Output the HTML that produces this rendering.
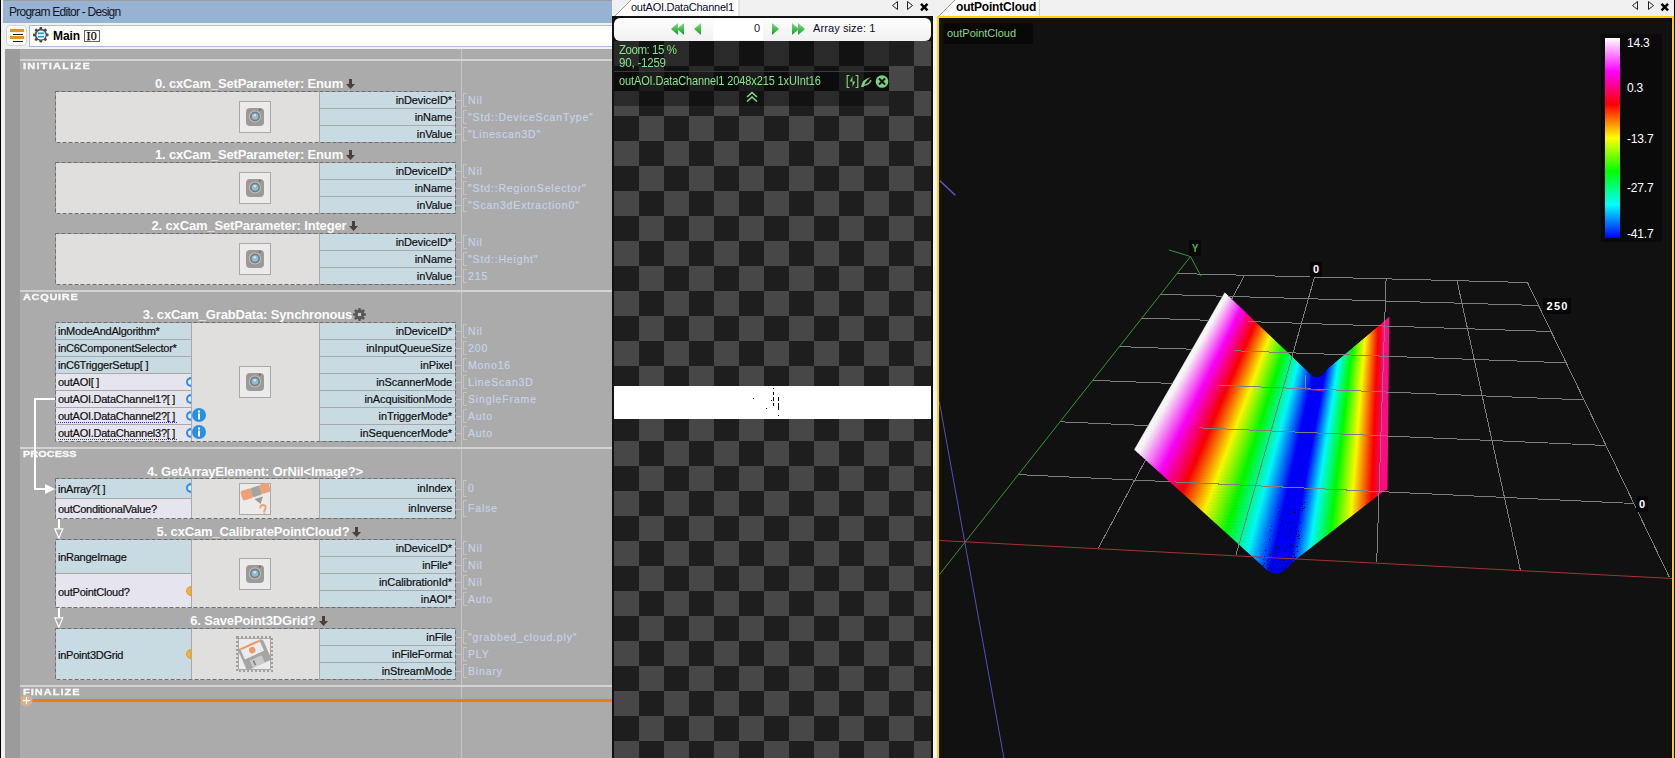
<!DOCTYPE html><html><head><meta charset="utf-8"><style>html,body{margin:0;padding:0;width:1675px;height:758px;overflow:hidden;background:#fff}body>div,body>svg{position:absolute}#root{position:relative;width:1675px;height:758px;overflow:hidden}#root>div,#root>svg{position:absolute;box-sizing:border-box}</style></head><body><div id="root"><div style="left:0px;top:0px;width:612px;height:758px;background:#ababab"></div>
<div style="left:0px;top:0px;width:1px;height:758px;background:#000"></div>
<div style="left:1px;top:0px;width:4px;height:758px;background:#f2f2f2"></div>
<div style="left:3px;top:0px;width:609px;height:23px;background:#97b2d2"></div>
<div style="left:3px;top:0px;width:609px;height:1px;background:#9c9c9c"></div>
<div style="left:9px;top:5.84px;font-family:'Liberation Sans', sans-serif;font-size:12px;line-height:12px;font-weight:normal;color:#101828;letter-spacing:-0.75px;white-space:pre;">Program Editor - Design</div>
<div style="left:3px;top:23px;width:609px;height:26px;background:#f0f0f0"></div>
<div style="left:6px;top:25px;width:21px;height:21px;background:#fdfdfd;border:1px solid #d2d2d2;border-radius:4px;box-sizing:border-box"></div>
<div style="left:10px;top:29px;width:14px;height:3px;background:#e8902a"></div>
<div style="left:13px;top:34px;width:10px;height:1.2px;background:#222"></div>
<div style="left:10px;top:36px;width:14px;height:3px;background:#e8902a"></div>
<div style="left:13px;top:41px;width:10px;height:1.2px;background:#222"></div>
<div style="left:29px;top:25px;width:590px;height:22px;background:#fff;border:1px solid #a4bcd9;box-sizing:border-box"></div>
<svg style="left:32.2px;top:26.2px" width="17.6" height="17.6"><circle cx="8.8" cy="8.8" r="6.08" fill="#4a4a4a"/><rect x="7.40" y="1.00" width="2.8" height="7.80" rx="0.8" fill="#4a4a4a" transform="rotate(0 8.8 8.8)"/><rect x="7.40" y="1.00" width="2.8" height="7.80" rx="0.8" fill="#4a4a4a" transform="rotate(45 8.8 8.8)"/><rect x="7.40" y="1.00" width="2.8" height="7.80" rx="0.8" fill="#4a4a4a" transform="rotate(90 8.8 8.8)"/><rect x="7.40" y="1.00" width="2.8" height="7.80" rx="0.8" fill="#4a4a4a" transform="rotate(135 8.8 8.8)"/><rect x="7.40" y="1.00" width="2.8" height="7.80" rx="0.8" fill="#4a4a4a" transform="rotate(180 8.8 8.8)"/><rect x="7.40" y="1.00" width="2.8" height="7.80" rx="0.8" fill="#4a4a4a" transform="rotate(225 8.8 8.8)"/><rect x="7.40" y="1.00" width="2.8" height="7.80" rx="0.8" fill="#4a4a4a" transform="rotate(270 8.8 8.8)"/><rect x="7.40" y="1.00" width="2.8" height="7.80" rx="0.8" fill="#4a4a4a" transform="rotate(315 8.8 8.8)"/><rect x="7.200000000000001" y="7.200000000000001" width="3.2" height="3.2" fill="#c8c8c8"/></svg>
<svg style="left:34px;top:28px" width="14" height="14"><circle cx="7" cy="7" r="4.6" fill="#fff"/><rect x="3.8" y="4.4" width="6.4" height="1.8" fill="#21a0e0"/><rect x="3.8" y="7.8" width="6.4" height="1.8" fill="#21a0e0"/></svg>
<div style="left:53px;top:29.84px;font-family:'Liberation Sans', sans-serif;font-size:12px;line-height:12px;font-weight:bold;color:#000;letter-spacing:-0.1px;white-space:pre;">Main</div>
<div style="left:84px;top:30px;width:16px;height:12px;border:1px solid #666;box-sizing:border-box;background:#fff"></div>
<div style="left:86.5px;top:29.95px;font-family:'Liberation Serif', serif;font-size:12px;line-height:12px;font-weight:normal;color:#000;letter-spacing:0.3px;white-space:pre;-webkit-text-stroke:0.25px #000;">I0</div>
<div style="left:5px;top:49px;width:15px;height:709px;background:#9b9b9b"></div>
<div style="left:461px;top:49px;width:1px;height:709px;background:#c6c6c6"></div>
<div style="left:20px;top:59px;width:592px;height:2px;background:#d3d3d3"></div>
<div style="left:20px;top:290px;width:592px;height:2px;background:#d3d3d3"></div>
<div style="left:20px;top:447px;width:592px;height:2px;background:#d3d3d3"></div>
<div style="left:20px;top:685px;width:592px;height:2px;background:#d3d3d3"></div>
<div style="left:34px;top:398px;width:2px;height:92px;background:#fff"></div>
<div style="left:22.5px;top:62.18px;font-family:'Liberation Sans', sans-serif;font-size:9px;line-height:9px;font-weight:bold;color:#f8f8f8;letter-spacing:1.02px;white-space:pre;transform:scaleX(1.22);transform-origin:0 0;-webkit-text-stroke:0.3px #f8f8f8;">INITIALIZE</div>
<div style="left:22.5px;top:293.38px;font-family:'Liberation Sans', sans-serif;font-size:9px;line-height:9px;font-weight:bold;color:#f8f8f8;letter-spacing:0.56px;white-space:pre;transform:scaleX(1.22);transform-origin:0 0;-webkit-text-stroke:0.3px #f8f8f8;">ACQUIRE</div>
<div style="left:22.5px;top:450.18px;font-family:'Liberation Sans', sans-serif;font-size:9px;line-height:9px;font-weight:bold;color:#f8f8f8;letter-spacing:0.0px;white-space:pre;transform:scaleX(1.22);transform-origin:0 0;-webkit-text-stroke:0.3px #f8f8f8;">PROCESS</div>
<div style="left:22.5px;top:688.08px;font-family:'Liberation Sans', sans-serif;font-size:9px;line-height:9px;font-weight:bold;color:#f8f8f8;letter-spacing:0.85px;white-space:pre;transform:scaleX(1.22);transform-origin:0 0;-webkit-text-stroke:0.3px #f8f8f8;">FINALIZE</div>
<div style="left:20px;top:699px;width:592px;height:3px;background:#f67a00"></div>
<svg style="left:20px;top:694px" width="13" height="13"><circle cx="6.5" cy="6.5" r="6" fill="#d6b192"/><rect x="3" y="6" width="7" height="1.2" fill="#fff"/><rect x="5.9" y="3" width="1.2" height="7" fill="#fff"/></svg>
<div style="left:0px;width:510px;top:77.00px;text-align:center;white-space:pre;font-family:'Liberation Sans', sans-serif;font-size:13px;line-height:13px;font-weight:bold;color:#fbfbfb;letter-spacing:-0.15px">0. cxCam_SetParameter: Enum<svg style="display:inline-block;vertical-align:baseline;margin-left:3px;position:relative;top:1px" width="9" height="10"><path d="M3 0 H6 V5 H9 L4.5 10 L0 5 H3 Z" fill="#4a3f3a"/></svg></div>
<div style="left:56px;top:92px;width:263px;height:51px;background:#e0dfdd"></div>
<div style="left:319px;top:92px;width:1px;height:51px;background:#a9a9a9"></div>
<div style="left:320px;top:92px;width:135px;height:16px;background:#c9dbe2"></div>
<div style="left:320px;top:108px;width:135px;height:1px;background:#a9a9a9"></div>
<div style="left:-148px;width:600px;text-align:right;top:94.69px;font-family:'Liberation Sans', sans-serif;font-size:11px;line-height:11px;font-weight:normal;color:#101010;letter-spacing:-0.1px;white-space:pre;-webkit-text-stroke:0.2px #101010;">inDeviceID*</div>
<div style="left:456px;top:100px;width:5px;height:1px;background:#c4c4c4"></div>
<div style="left:463px;top:93px;width:1px;height:14px;background:#c4c4c4"></div>
<div style="left:463px;top:93px;width:4px;height:1px;background:#c4c4c4"></div>
<div style="left:463px;top:106px;width:4px;height:1px;background:#c4c4c4"></div>
<div style="left:468px;top:94.61px;font-family:'Liberation Sans', sans-serif;font-size:10.5px;line-height:10.5px;font-weight:normal;color:#c8d4ea;letter-spacing:0.85px;white-space:pre;-webkit-text-stroke:0.15px #c8d4ea;">Nil</div>
<div style="left:320px;top:109px;width:135px;height:16px;background:#c9dbe2"></div>
<div style="left:320px;top:125px;width:135px;height:1px;background:#a9a9a9"></div>
<div style="left:-148px;width:600px;text-align:right;top:111.69px;font-family:'Liberation Sans', sans-serif;font-size:11px;line-height:11px;font-weight:normal;color:#101010;letter-spacing:-0.1px;white-space:pre;-webkit-text-stroke:0.2px #101010;">inName</div>
<div style="left:456px;top:117px;width:5px;height:1px;background:#c4c4c4"></div>
<div style="left:463px;top:110px;width:1px;height:14px;background:#c4c4c4"></div>
<div style="left:463px;top:110px;width:4px;height:1px;background:#c4c4c4"></div>
<div style="left:463px;top:123px;width:4px;height:1px;background:#c4c4c4"></div>
<div style="left:468px;top:111.61px;font-family:'Liberation Sans', sans-serif;font-size:10.5px;line-height:10.5px;font-weight:normal;color:#c8d4ea;letter-spacing:0.85px;white-space:pre;-webkit-text-stroke:0.15px #c8d4ea;">&quot;Std::DeviceScanType&quot;</div>
<div style="left:320px;top:126px;width:135px;height:16px;background:#c9dbe2"></div>
<div style="left:-148px;width:600px;text-align:right;top:128.69px;font-family:'Liberation Sans', sans-serif;font-size:11px;line-height:11px;font-weight:normal;color:#101010;letter-spacing:-0.1px;white-space:pre;-webkit-text-stroke:0.2px #101010;">inValue</div>
<div style="left:456px;top:134px;width:5px;height:1px;background:#c4c4c4"></div>
<div style="left:463px;top:127px;width:1px;height:14px;background:#c4c4c4"></div>
<div style="left:463px;top:127px;width:4px;height:1px;background:#c4c4c4"></div>
<div style="left:463px;top:140px;width:4px;height:1px;background:#c4c4c4"></div>
<div style="left:468px;top:128.61px;font-family:'Liberation Sans', sans-serif;font-size:10.5px;line-height:10.5px;font-weight:normal;color:#c8d4ea;letter-spacing:0.85px;white-space:pre;-webkit-text-stroke:0.15px #c8d4ea;">&quot;Linescan3D&quot;</div>
<svg style="left:55px;top:91px" width="401" height="52"><rect x="0.5" y="0.5" width="400" height="51" fill="none" stroke="#6e6e6e" stroke-width="1" stroke-dasharray="4 2"/></svg>
<svg style="left:239px;top:101px" width="32" height="32"><rect x="0.5" y="0.5" width="31" height="31" fill="#ecebea" stroke="#a9a9a9"/><rect x="7" y="7" width="18" height="18" rx="4" fill="#9a9a9a"/><circle cx="16" cy="15.5" r="6" fill="#c2c2c2"/><circle cx="16" cy="15.5" r="5" fill="#7a7a7a"/><circle cx="16" cy="15.5" r="3.3" fill="#8cbfd6"/><circle cx="15.8" cy="14.3" r="1.2" fill="#d0e6f0"/><circle cx="10.2" cy="9.2" r="1" fill="#e07070"/><circle cx="20.8" cy="8.8" r="1" fill="#6a6a6a"/></svg>
<div style="left:0px;width:510px;top:148.00px;text-align:center;white-space:pre;font-family:'Liberation Sans', sans-serif;font-size:13px;line-height:13px;font-weight:bold;color:#fbfbfb;letter-spacing:-0.15px">1. cxCam_SetParameter: Enum<svg style="display:inline-block;vertical-align:baseline;margin-left:3px;position:relative;top:1px" width="9" height="10"><path d="M3 0 H6 V5 H9 L4.5 10 L0 5 H3 Z" fill="#4a3f3a"/></svg></div>
<div style="left:56px;top:163px;width:263px;height:51px;background:#e0dfdd"></div>
<div style="left:319px;top:163px;width:1px;height:51px;background:#a9a9a9"></div>
<div style="left:320px;top:163px;width:135px;height:16px;background:#c9dbe2"></div>
<div style="left:320px;top:179px;width:135px;height:1px;background:#a9a9a9"></div>
<div style="left:-148px;width:600px;text-align:right;top:165.69px;font-family:'Liberation Sans', sans-serif;font-size:11px;line-height:11px;font-weight:normal;color:#101010;letter-spacing:-0.1px;white-space:pre;-webkit-text-stroke:0.2px #101010;">inDeviceID*</div>
<div style="left:456px;top:171px;width:5px;height:1px;background:#c4c4c4"></div>
<div style="left:463px;top:164px;width:1px;height:14px;background:#c4c4c4"></div>
<div style="left:463px;top:164px;width:4px;height:1px;background:#c4c4c4"></div>
<div style="left:463px;top:177px;width:4px;height:1px;background:#c4c4c4"></div>
<div style="left:468px;top:165.61px;font-family:'Liberation Sans', sans-serif;font-size:10.5px;line-height:10.5px;font-weight:normal;color:#c8d4ea;letter-spacing:0.85px;white-space:pre;-webkit-text-stroke:0.15px #c8d4ea;">Nil</div>
<div style="left:320px;top:180px;width:135px;height:16px;background:#c9dbe2"></div>
<div style="left:320px;top:196px;width:135px;height:1px;background:#a9a9a9"></div>
<div style="left:-148px;width:600px;text-align:right;top:182.69px;font-family:'Liberation Sans', sans-serif;font-size:11px;line-height:11px;font-weight:normal;color:#101010;letter-spacing:-0.1px;white-space:pre;-webkit-text-stroke:0.2px #101010;">inName</div>
<div style="left:456px;top:188px;width:5px;height:1px;background:#c4c4c4"></div>
<div style="left:463px;top:181px;width:1px;height:14px;background:#c4c4c4"></div>
<div style="left:463px;top:181px;width:4px;height:1px;background:#c4c4c4"></div>
<div style="left:463px;top:194px;width:4px;height:1px;background:#c4c4c4"></div>
<div style="left:468px;top:182.61px;font-family:'Liberation Sans', sans-serif;font-size:10.5px;line-height:10.5px;font-weight:normal;color:#c8d4ea;letter-spacing:0.85px;white-space:pre;-webkit-text-stroke:0.15px #c8d4ea;">&quot;Std::RegionSelector&quot;</div>
<div style="left:320px;top:197px;width:135px;height:16px;background:#c9dbe2"></div>
<div style="left:-148px;width:600px;text-align:right;top:199.69px;font-family:'Liberation Sans', sans-serif;font-size:11px;line-height:11px;font-weight:normal;color:#101010;letter-spacing:-0.1px;white-space:pre;-webkit-text-stroke:0.2px #101010;">inValue</div>
<div style="left:456px;top:205px;width:5px;height:1px;background:#c4c4c4"></div>
<div style="left:463px;top:198px;width:1px;height:14px;background:#c4c4c4"></div>
<div style="left:463px;top:198px;width:4px;height:1px;background:#c4c4c4"></div>
<div style="left:463px;top:211px;width:4px;height:1px;background:#c4c4c4"></div>
<div style="left:468px;top:199.61px;font-family:'Liberation Sans', sans-serif;font-size:10.5px;line-height:10.5px;font-weight:normal;color:#c8d4ea;letter-spacing:0.85px;white-space:pre;-webkit-text-stroke:0.15px #c8d4ea;">&quot;Scan3dExtraction0&quot;</div>
<svg style="left:55px;top:162px" width="401" height="52"><rect x="0.5" y="0.5" width="400" height="51" fill="none" stroke="#6e6e6e" stroke-width="1" stroke-dasharray="4 2"/></svg>
<svg style="left:239px;top:172px" width="32" height="32"><rect x="0.5" y="0.5" width="31" height="31" fill="#ecebea" stroke="#a9a9a9"/><rect x="7" y="7" width="18" height="18" rx="4" fill="#9a9a9a"/><circle cx="16" cy="15.5" r="6" fill="#c2c2c2"/><circle cx="16" cy="15.5" r="5" fill="#7a7a7a"/><circle cx="16" cy="15.5" r="3.3" fill="#8cbfd6"/><circle cx="15.8" cy="14.3" r="1.2" fill="#d0e6f0"/><circle cx="10.2" cy="9.2" r="1" fill="#e07070"/><circle cx="20.8" cy="8.8" r="1" fill="#6a6a6a"/></svg>
<div style="left:0px;width:510px;top:219.00px;text-align:center;white-space:pre;font-family:'Liberation Sans', sans-serif;font-size:13px;line-height:13px;font-weight:bold;color:#fbfbfb;letter-spacing:-0.15px">2. cxCam_SetParameter: Integer<svg style="display:inline-block;vertical-align:baseline;margin-left:3px;position:relative;top:1px" width="9" height="10"><path d="M3 0 H6 V5 H9 L4.5 10 L0 5 H3 Z" fill="#4a3f3a"/></svg></div>
<div style="left:56px;top:234px;width:263px;height:51px;background:#e0dfdd"></div>
<div style="left:319px;top:234px;width:1px;height:51px;background:#a9a9a9"></div>
<div style="left:320px;top:234px;width:135px;height:16px;background:#c9dbe2"></div>
<div style="left:320px;top:250px;width:135px;height:1px;background:#a9a9a9"></div>
<div style="left:-148px;width:600px;text-align:right;top:236.69px;font-family:'Liberation Sans', sans-serif;font-size:11px;line-height:11px;font-weight:normal;color:#101010;letter-spacing:-0.1px;white-space:pre;-webkit-text-stroke:0.2px #101010;">inDeviceID*</div>
<div style="left:456px;top:242px;width:5px;height:1px;background:#c4c4c4"></div>
<div style="left:463px;top:235px;width:1px;height:14px;background:#c4c4c4"></div>
<div style="left:463px;top:235px;width:4px;height:1px;background:#c4c4c4"></div>
<div style="left:463px;top:248px;width:4px;height:1px;background:#c4c4c4"></div>
<div style="left:468px;top:236.61px;font-family:'Liberation Sans', sans-serif;font-size:10.5px;line-height:10.5px;font-weight:normal;color:#c8d4ea;letter-spacing:0.85px;white-space:pre;-webkit-text-stroke:0.15px #c8d4ea;">Nil</div>
<div style="left:320px;top:251px;width:135px;height:16px;background:#c9dbe2"></div>
<div style="left:320px;top:267px;width:135px;height:1px;background:#a9a9a9"></div>
<div style="left:-148px;width:600px;text-align:right;top:253.69px;font-family:'Liberation Sans', sans-serif;font-size:11px;line-height:11px;font-weight:normal;color:#101010;letter-spacing:-0.1px;white-space:pre;-webkit-text-stroke:0.2px #101010;">inName</div>
<div style="left:456px;top:259px;width:5px;height:1px;background:#c4c4c4"></div>
<div style="left:463px;top:252px;width:1px;height:14px;background:#c4c4c4"></div>
<div style="left:463px;top:252px;width:4px;height:1px;background:#c4c4c4"></div>
<div style="left:463px;top:265px;width:4px;height:1px;background:#c4c4c4"></div>
<div style="left:468px;top:253.61px;font-family:'Liberation Sans', sans-serif;font-size:10.5px;line-height:10.5px;font-weight:normal;color:#c8d4ea;letter-spacing:0.85px;white-space:pre;-webkit-text-stroke:0.15px #c8d4ea;">&quot;Std::Height&quot;</div>
<div style="left:320px;top:268px;width:135px;height:16px;background:#c9dbe2"></div>
<div style="left:-148px;width:600px;text-align:right;top:270.69px;font-family:'Liberation Sans', sans-serif;font-size:11px;line-height:11px;font-weight:normal;color:#101010;letter-spacing:-0.1px;white-space:pre;-webkit-text-stroke:0.2px #101010;">inValue</div>
<div style="left:456px;top:276px;width:5px;height:1px;background:#c4c4c4"></div>
<div style="left:463px;top:269px;width:1px;height:14px;background:#c4c4c4"></div>
<div style="left:463px;top:269px;width:4px;height:1px;background:#c4c4c4"></div>
<div style="left:463px;top:282px;width:4px;height:1px;background:#c4c4c4"></div>
<div style="left:468px;top:270.61px;font-family:'Liberation Sans', sans-serif;font-size:10.5px;line-height:10.5px;font-weight:normal;color:#c8d4ea;letter-spacing:0.85px;white-space:pre;-webkit-text-stroke:0.15px #c8d4ea;">215</div>
<svg style="left:55px;top:233px" width="401" height="52"><rect x="0.5" y="0.5" width="400" height="51" fill="none" stroke="#6e6e6e" stroke-width="1" stroke-dasharray="4 2"/></svg>
<svg style="left:239px;top:243px" width="32" height="32"><rect x="0.5" y="0.5" width="31" height="31" fill="#ecebea" stroke="#a9a9a9"/><rect x="7" y="7" width="18" height="18" rx="4" fill="#9a9a9a"/><circle cx="16" cy="15.5" r="6" fill="#c2c2c2"/><circle cx="16" cy="15.5" r="5" fill="#7a7a7a"/><circle cx="16" cy="15.5" r="3.3" fill="#8cbfd6"/><circle cx="15.8" cy="14.3" r="1.2" fill="#d0e6f0"/><circle cx="10.2" cy="9.2" r="1" fill="#e07070"/><circle cx="20.8" cy="8.8" r="1" fill="#6a6a6a"/></svg>
<div style="left:0px;width:510px;top:308.00px;text-align:center;white-space:pre;font-family:'Liberation Sans', sans-serif;font-size:13px;line-height:13px;font-weight:bold;color:#fbfbfb;letter-spacing:-0.15px">3. cxCam_GrabData: Synchronous<span style="display:inline-block;width:15px"></span></div>
<svg style="left:352.0px;top:306.9px" width="15.0" height="15.0"><circle cx="7.5" cy="7.5" r="4.81" fill="#585858"/><rect x="6.20" y="1.00" width="2.6" height="6.50" rx="0.8" fill="#585858" transform="rotate(0 7.5 7.5)"/><rect x="6.20" y="1.00" width="2.6" height="6.50" rx="0.8" fill="#585858" transform="rotate(45 7.5 7.5)"/><rect x="6.20" y="1.00" width="2.6" height="6.50" rx="0.8" fill="#585858" transform="rotate(90 7.5 7.5)"/><rect x="6.20" y="1.00" width="2.6" height="6.50" rx="0.8" fill="#585858" transform="rotate(135 7.5 7.5)"/><rect x="6.20" y="1.00" width="2.6" height="6.50" rx="0.8" fill="#585858" transform="rotate(180 7.5 7.5)"/><rect x="6.20" y="1.00" width="2.6" height="6.50" rx="0.8" fill="#585858" transform="rotate(225 7.5 7.5)"/><rect x="6.20" y="1.00" width="2.6" height="6.50" rx="0.8" fill="#585858" transform="rotate(270 7.5 7.5)"/><rect x="6.20" y="1.00" width="2.6" height="6.50" rx="0.8" fill="#585858" transform="rotate(315 7.5 7.5)"/><rect x="5.9" y="5.9" width="3.2" height="3.2" fill="#c8c8c8"/></svg>
<div style="left:56px;top:323px;width:263px;height:119px;background:#e0dfdd"></div>
<div style="left:319px;top:323px;width:1px;height:119px;background:#a9a9a9"></div>
<div style="left:320px;top:323px;width:135px;height:16px;background:#c9dbe2"></div>
<div style="left:320px;top:339px;width:135px;height:1px;background:#a9a9a9"></div>
<div style="left:-148px;width:600px;text-align:right;top:325.69px;font-family:'Liberation Sans', sans-serif;font-size:11px;line-height:11px;font-weight:normal;color:#101010;letter-spacing:-0.1px;white-space:pre;-webkit-text-stroke:0.2px #101010;">inDeviceID*</div>
<div style="left:456px;top:331px;width:5px;height:1px;background:#c4c4c4"></div>
<div style="left:463px;top:324px;width:1px;height:14px;background:#c4c4c4"></div>
<div style="left:463px;top:324px;width:4px;height:1px;background:#c4c4c4"></div>
<div style="left:463px;top:337px;width:4px;height:1px;background:#c4c4c4"></div>
<div style="left:468px;top:325.61px;font-family:'Liberation Sans', sans-serif;font-size:10.5px;line-height:10.5px;font-weight:normal;color:#c8d4ea;letter-spacing:0.85px;white-space:pre;-webkit-text-stroke:0.15px #c8d4ea;">Nil</div>
<div style="left:320px;top:340px;width:135px;height:16px;background:#c9dbe2"></div>
<div style="left:320px;top:356px;width:135px;height:1px;background:#a9a9a9"></div>
<div style="left:-148px;width:600px;text-align:right;top:342.69px;font-family:'Liberation Sans', sans-serif;font-size:11px;line-height:11px;font-weight:normal;color:#101010;letter-spacing:-0.1px;white-space:pre;-webkit-text-stroke:0.2px #101010;">inInputQueueSize</div>
<div style="left:456px;top:348px;width:5px;height:1px;background:#c4c4c4"></div>
<div style="left:463px;top:341px;width:1px;height:14px;background:#c4c4c4"></div>
<div style="left:463px;top:341px;width:4px;height:1px;background:#c4c4c4"></div>
<div style="left:463px;top:354px;width:4px;height:1px;background:#c4c4c4"></div>
<div style="left:468px;top:342.61px;font-family:'Liberation Sans', sans-serif;font-size:10.5px;line-height:10.5px;font-weight:normal;color:#c8d4ea;letter-spacing:0.85px;white-space:pre;-webkit-text-stroke:0.15px #c8d4ea;">200</div>
<div style="left:320px;top:357px;width:135px;height:16px;background:#c9dbe2"></div>
<div style="left:320px;top:373px;width:135px;height:1px;background:#a9a9a9"></div>
<div style="left:-148px;width:600px;text-align:right;top:359.69px;font-family:'Liberation Sans', sans-serif;font-size:11px;line-height:11px;font-weight:normal;color:#101010;letter-spacing:-0.1px;white-space:pre;-webkit-text-stroke:0.2px #101010;">inPixel</div>
<div style="left:456px;top:365px;width:5px;height:1px;background:#c4c4c4"></div>
<div style="left:463px;top:358px;width:1px;height:14px;background:#c4c4c4"></div>
<div style="left:463px;top:358px;width:4px;height:1px;background:#c4c4c4"></div>
<div style="left:463px;top:371px;width:4px;height:1px;background:#c4c4c4"></div>
<div style="left:468px;top:359.61px;font-family:'Liberation Sans', sans-serif;font-size:10.5px;line-height:10.5px;font-weight:normal;color:#c8d4ea;letter-spacing:0.85px;white-space:pre;-webkit-text-stroke:0.15px #c8d4ea;">Mono16</div>
<div style="left:320px;top:374px;width:135px;height:16px;background:#c9dbe2"></div>
<div style="left:320px;top:390px;width:135px;height:1px;background:#a9a9a9"></div>
<div style="left:-148px;width:600px;text-align:right;top:376.69px;font-family:'Liberation Sans', sans-serif;font-size:11px;line-height:11px;font-weight:normal;color:#101010;letter-spacing:-0.1px;white-space:pre;-webkit-text-stroke:0.2px #101010;">inScannerMode</div>
<div style="left:456px;top:382px;width:5px;height:1px;background:#c4c4c4"></div>
<div style="left:463px;top:375px;width:1px;height:14px;background:#c4c4c4"></div>
<div style="left:463px;top:375px;width:4px;height:1px;background:#c4c4c4"></div>
<div style="left:463px;top:388px;width:4px;height:1px;background:#c4c4c4"></div>
<div style="left:468px;top:376.61px;font-family:'Liberation Sans', sans-serif;font-size:10.5px;line-height:10.5px;font-weight:normal;color:#c8d4ea;letter-spacing:0.85px;white-space:pre;-webkit-text-stroke:0.15px #c8d4ea;">LineScan3D</div>
<div style="left:320px;top:391px;width:135px;height:16px;background:#c9dbe2"></div>
<div style="left:320px;top:407px;width:135px;height:1px;background:#a9a9a9"></div>
<div style="left:-148px;width:600px;text-align:right;top:393.69px;font-family:'Liberation Sans', sans-serif;font-size:11px;line-height:11px;font-weight:normal;color:#101010;letter-spacing:-0.1px;white-space:pre;-webkit-text-stroke:0.2px #101010;">inAcquisitionMode</div>
<div style="left:456px;top:399px;width:5px;height:1px;background:#c4c4c4"></div>
<div style="left:463px;top:392px;width:1px;height:14px;background:#c4c4c4"></div>
<div style="left:463px;top:392px;width:4px;height:1px;background:#c4c4c4"></div>
<div style="left:463px;top:405px;width:4px;height:1px;background:#c4c4c4"></div>
<div style="left:468px;top:393.61px;font-family:'Liberation Sans', sans-serif;font-size:10.5px;line-height:10.5px;font-weight:normal;color:#c8d4ea;letter-spacing:0.85px;white-space:pre;-webkit-text-stroke:0.15px #c8d4ea;">SingleFrame</div>
<div style="left:320px;top:408px;width:135px;height:16px;background:#c9dbe2"></div>
<div style="left:320px;top:424px;width:135px;height:1px;background:#a9a9a9"></div>
<div style="left:-148px;width:600px;text-align:right;top:410.69px;font-family:'Liberation Sans', sans-serif;font-size:11px;line-height:11px;font-weight:normal;color:#101010;letter-spacing:-0.1px;white-space:pre;-webkit-text-stroke:0.2px #101010;">inTriggerMode*</div>
<div style="left:456px;top:416px;width:5px;height:1px;background:#c4c4c4"></div>
<div style="left:463px;top:409px;width:1px;height:14px;background:#c4c4c4"></div>
<div style="left:463px;top:409px;width:4px;height:1px;background:#c4c4c4"></div>
<div style="left:463px;top:422px;width:4px;height:1px;background:#c4c4c4"></div>
<div style="left:468px;top:410.61px;font-family:'Liberation Sans', sans-serif;font-size:10.5px;line-height:10.5px;font-weight:normal;color:#c8d4ea;letter-spacing:0.85px;white-space:pre;-webkit-text-stroke:0.15px #c8d4ea;">Auto</div>
<div style="left:320px;top:425px;width:135px;height:16px;background:#c9dbe2"></div>
<div style="left:-148px;width:600px;text-align:right;top:427.69px;font-family:'Liberation Sans', sans-serif;font-size:11px;line-height:11px;font-weight:normal;color:#101010;letter-spacing:-0.1px;white-space:pre;-webkit-text-stroke:0.2px #101010;">inSequencerMode*</div>
<div style="left:456px;top:433px;width:5px;height:1px;background:#c4c4c4"></div>
<div style="left:463px;top:426px;width:1px;height:14px;background:#c4c4c4"></div>
<div style="left:463px;top:426px;width:4px;height:1px;background:#c4c4c4"></div>
<div style="left:463px;top:439px;width:4px;height:1px;background:#c4c4c4"></div>
<div style="left:468px;top:427.61px;font-family:'Liberation Sans', sans-serif;font-size:10.5px;line-height:10.5px;font-weight:normal;color:#c8d4ea;letter-spacing:0.85px;white-space:pre;-webkit-text-stroke:0.15px #c8d4ea;">Auto</div>
<div style="left:191px;top:323px;width:1px;height:119px;background:#a9a9a9"></div>
<div style="left:56px;top:323px;width:135px;height:16px;background:#c9dbe2"></div>
<div style="left:56px;top:339px;width:135px;height:1px;background:#a9a9a9"></div>
<div style="left:58px;top:325.69px;font-family:'Liberation Sans', sans-serif;font-size:11px;line-height:11px;font-weight:normal;color:#101010;letter-spacing:-0.25px;white-space:pre;-webkit-text-stroke:0.2px #101010;">inModeAndAlgorithm*</div>
<div style="left:56px;top:340px;width:135px;height:16px;background:#c9dbe2"></div>
<div style="left:56px;top:356px;width:135px;height:1px;background:#a9a9a9"></div>
<div style="left:58px;top:342.69px;font-family:'Liberation Sans', sans-serif;font-size:11px;line-height:11px;font-weight:normal;color:#101010;letter-spacing:-0.25px;white-space:pre;-webkit-text-stroke:0.2px #101010;">inC6ComponentSelector*</div>
<div style="left:56px;top:357px;width:135px;height:16px;background:#c9dbe2"></div>
<div style="left:56px;top:373px;width:135px;height:1px;background:#a9a9a9"></div>
<div style="left:58px;top:359.69px;font-family:'Liberation Sans', sans-serif;font-size:11px;line-height:11px;font-weight:normal;color:#101010;letter-spacing:-0.25px;white-space:pre;-webkit-text-stroke:0.2px #101010;">inC6TriggerSetup[ ]</div>
<div style="left:56px;top:374px;width:135px;height:16px;background:#e6e4ec"></div>
<div style="left:56px;top:390px;width:135px;height:1px;background:#a9a9a9"></div>
<div style="left:58px;top:376.69px;font-family:'Liberation Sans', sans-serif;font-size:11px;line-height:11px;font-weight:normal;color:#101010;letter-spacing:-0.25px;white-space:pre;-webkit-text-stroke:0.2px #101010;">outAOI[ ]</div>
<div style="left:56px;top:391px;width:135px;height:16px;background:#e6e4ec"></div>
<div style="left:56px;top:407px;width:135px;height:1px;background:#a9a9a9"></div>
<div style="left:58px;top:393.69px;font-family:'Liberation Sans', sans-serif;font-size:11px;line-height:11px;font-weight:normal;color:#101010;letter-spacing:-0.25px;white-space:pre;-webkit-text-stroke:0.2px #101010;">outAOI.DataChannel1?[ ]</div>
<div style="left:56px;top:408px;width:135px;height:16px;background:#e6e4ec"></div>
<div style="left:56px;top:424px;width:135px;height:1px;background:#a9a9a9"></div>
<div style="left:58px;top:422px;width:119px;height:1px;background:repeating-linear-gradient(90deg,#2434d8 0 1px,transparent 1px 2px)"></div>
<div style="left:58px;top:410.69px;font-family:'Liberation Sans', sans-serif;font-size:11px;line-height:11px;font-weight:normal;color:#101010;letter-spacing:-0.25px;white-space:pre;-webkit-text-stroke:0.2px #101010;">outAOI.DataChannel2?[ ]</div>
<div style="left:56px;top:425px;width:135px;height:16px;background:#e6e4ec"></div>
<div style="left:58px;top:439px;width:119px;height:1px;background:repeating-linear-gradient(90deg,#2434d8 0 1px,transparent 1px 2px)"></div>
<div style="left:58px;top:427.69px;font-family:'Liberation Sans', sans-serif;font-size:11px;line-height:11px;font-weight:normal;color:#101010;letter-spacing:-0.25px;white-space:pre;-webkit-text-stroke:0.2px #101010;">outAOI.DataChannel3?[ ]</div>
<svg style="left:55px;top:322px" width="401" height="120"><rect x="0.5" y="0.5" width="400" height="119" fill="none" stroke="#6e6e6e" stroke-width="1" stroke-dasharray="4 2"/></svg>
<svg style="left:239px;top:366px" width="32" height="32"><rect x="0.5" y="0.5" width="31" height="31" fill="#ecebea" stroke="#a9a9a9"/><rect x="7" y="7" width="18" height="18" rx="4" fill="#9a9a9a"/><circle cx="16" cy="15.5" r="6" fill="#c2c2c2"/><circle cx="16" cy="15.5" r="5" fill="#7a7a7a"/><circle cx="16" cy="15.5" r="3.3" fill="#8cbfd6"/><circle cx="15.8" cy="14.3" r="1.2" fill="#d0e6f0"/><circle cx="10.2" cy="9.2" r="1" fill="#e07070"/><circle cx="20.8" cy="8.8" r="1" fill="#6a6a6a"/></svg>
<svg style="left:186px;top:377px" width="5" height="10"><path d="M5 0 A5 5 0 0 0 5 10 Z" fill="#2a8ef2"/><path d="M5 2.2 A3 2.8 0 0 0 5 7.8 Z" fill="#e4eefb"/></svg>
<svg style="left:186px;top:394px" width="5" height="10"><path d="M5 0 A5 5 0 0 0 5 10 Z" fill="#2a8ef2"/><path d="M5 2.2 A3 2.8 0 0 0 5 7.8 Z" fill="#e4eefb"/></svg>
<svg style="left:186px;top:411px" width="5" height="10"><path d="M5 0 A5 5 0 0 0 5 10 Z" fill="#2a8ef2"/><path d="M5 2.2 A3 2.8 0 0 0 5 7.8 Z" fill="#e4eefb"/></svg>
<svg style="left:186px;top:428px" width="5" height="10"><path d="M5 0 A5 5 0 0 0 5 10 Z" fill="#2a8ef2"/><path d="M5 2.2 A3 2.8 0 0 0 5 7.8 Z" fill="#e4eefb"/></svg>
<svg style="left:192px;top:408px" width="14" height="14"><circle cx="7" cy="7" r="7" fill="#2b8fe0"/><rect x="6" y="5.5" width="2" height="6" fill="#fff"/><rect x="6" y="2.5" width="2" height="2" fill="#fff"/></svg>
<svg style="left:192px;top:425px" width="14" height="14"><circle cx="7" cy="7" r="7" fill="#2b8fe0"/><rect x="6" y="5.5" width="2" height="6" fill="#fff"/><rect x="6" y="2.5" width="2" height="2" fill="#fff"/></svg>
<div style="left:0px;width:510px;top:465.00px;text-align:center;white-space:pre;font-family:'Liberation Sans', sans-serif;font-size:13px;line-height:13px;font-weight:bold;color:#fbfbfb;letter-spacing:-0.15px">4. GetArrayElement: OrNil&lt;Image?&gt;</div>
<div style="left:56px;top:479px;width:263px;height:40px;background:#e0dfdd"></div>
<div style="left:319px;top:479px;width:1px;height:40px;background:#a9a9a9"></div>
<div style="left:320px;top:479px;width:135px;height:19px;background:#c9dbe2"></div>
<div style="left:320px;top:498px;width:135px;height:1px;background:#a9a9a9"></div>
<div style="left:-148px;width:600px;text-align:right;top:482.89px;font-family:'Liberation Sans', sans-serif;font-size:11px;line-height:11px;font-weight:normal;color:#101010;letter-spacing:-0.1px;white-space:pre;-webkit-text-stroke:0.2px #101010;">inIndex</div>
<div style="left:456px;top:489px;width:5px;height:1px;background:#c4c4c4"></div>
<div style="left:463px;top:480px;width:1px;height:17px;background:#c4c4c4"></div>
<div style="left:463px;top:480px;width:4px;height:1px;background:#c4c4c4"></div>
<div style="left:463px;top:496px;width:4px;height:1px;background:#c4c4c4"></div>
<div style="left:468px;top:482.81px;font-family:'Liberation Sans', sans-serif;font-size:10.5px;line-height:10.5px;font-weight:normal;color:#c8d4ea;letter-spacing:0.85px;white-space:pre;-webkit-text-stroke:0.15px #c8d4ea;">0</div>
<div style="left:320px;top:499px;width:135px;height:19px;background:#c9dbe2"></div>
<div style="left:-148px;width:600px;text-align:right;top:502.89px;font-family:'Liberation Sans', sans-serif;font-size:11px;line-height:11px;font-weight:normal;color:#101010;letter-spacing:-0.1px;white-space:pre;-webkit-text-stroke:0.2px #101010;">inInverse</div>
<div style="left:456px;top:509px;width:5px;height:1px;background:#c4c4c4"></div>
<div style="left:463px;top:500px;width:1px;height:17px;background:#c4c4c4"></div>
<div style="left:463px;top:500px;width:4px;height:1px;background:#c4c4c4"></div>
<div style="left:463px;top:516px;width:4px;height:1px;background:#c4c4c4"></div>
<div style="left:468px;top:502.81px;font-family:'Liberation Sans', sans-serif;font-size:10.5px;line-height:10.5px;font-weight:normal;color:#c8d4ea;letter-spacing:0.85px;white-space:pre;-webkit-text-stroke:0.15px #c8d4ea;">False</div>
<div style="left:191px;top:479px;width:1px;height:40px;background:#a9a9a9"></div>
<div style="left:56px;top:479px;width:135px;height:19px;background:#c9dbe2"></div>
<div style="left:56px;top:498px;width:135px;height:1px;background:#a9a9a9"></div>
<div style="left:58px;top:484.19px;font-family:'Liberation Sans', sans-serif;font-size:11px;line-height:11px;font-weight:normal;color:#101010;letter-spacing:-0.25px;white-space:pre;-webkit-text-stroke:0.2px #101010;">inArray?[ ]</div>
<div style="left:56px;top:499px;width:135px;height:19px;background:#e6e4ec"></div>
<div style="left:58px;top:504.19px;font-family:'Liberation Sans', sans-serif;font-size:11px;line-height:11px;font-weight:normal;color:#101010;letter-spacing:-0.25px;white-space:pre;-webkit-text-stroke:0.2px #101010;">outConditionalValue?</div>
<svg style="left:55px;top:478px" width="401" height="41"><rect x="0.5" y="0.5" width="400" height="40" fill="none" stroke="#6e6e6e" stroke-width="1" stroke-dasharray="4 2"/></svg>
<svg style="left:239px;top:483px" width="32" height="32"><rect x="0.5" y="0.5" width="31" height="31" fill="#ecebea" stroke="#a9a9a9"/><g transform="rotate(-17 16 9)"><rect x="2" y="4" width="11.5" height="10" rx="2" fill="#eba27a"/><rect x="13" y="4" width="9" height="9.5" rx="1" fill="#a3a3a3"/><rect x="21.5" y="3.5" width="10" height="9.5" rx="2" fill="#eba27a"/></g><path d="M15.5 16 L24 13.5 L21.5 21 Z" fill="#9b9b9b"/><path d="M21.5 25.5 Q21 22 24 22 Q27.5 22.3 26.3 25.8 Q25 27.5 25.2 29.5" fill="none" stroke="#eba27a" stroke-width="1.9"/><circle cx="25.4" cy="31" r="1.1" fill="#eba27a"/></svg>
<svg style="left:186px;top:483px" width="5" height="10"><path d="M5 0 A5 5 0 0 0 5 10 Z" fill="#2a8ef2"/><path d="M5 2.2 A3 2.8 0 0 0 5 7.8 Z" fill="#e4eefb"/></svg>
<div style="left:4px;width:510px;top:524.50px;text-align:center;white-space:pre;font-family:'Liberation Sans', sans-serif;font-size:13px;line-height:13px;font-weight:bold;color:#fbfbfb;letter-spacing:-0.15px">5. cxCam_CalibratePointCloud?<svg style="display:inline-block;vertical-align:baseline;margin-left:3px;position:relative;top:1px" width="9" height="10"><path d="M3 0 H6 V5 H9 L4.5 10 L0 5 H3 Z" fill="#4a3f3a"/></svg></div>
<div style="left:56px;top:540px;width:263px;height:68px;background:#e0dfdd"></div>
<div style="left:319px;top:540px;width:1px;height:68px;background:#a9a9a9"></div>
<div style="left:320px;top:540px;width:135px;height:16px;background:#c9dbe2"></div>
<div style="left:320px;top:556px;width:135px;height:1px;background:#a9a9a9"></div>
<div style="left:-148px;width:600px;text-align:right;top:542.69px;font-family:'Liberation Sans', sans-serif;font-size:11px;line-height:11px;font-weight:normal;color:#101010;letter-spacing:-0.1px;white-space:pre;-webkit-text-stroke:0.2px #101010;">inDeviceID*</div>
<div style="left:456px;top:548px;width:5px;height:1px;background:#c4c4c4"></div>
<div style="left:463px;top:541px;width:1px;height:14px;background:#c4c4c4"></div>
<div style="left:463px;top:541px;width:4px;height:1px;background:#c4c4c4"></div>
<div style="left:463px;top:554px;width:4px;height:1px;background:#c4c4c4"></div>
<div style="left:468px;top:542.61px;font-family:'Liberation Sans', sans-serif;font-size:10.5px;line-height:10.5px;font-weight:normal;color:#c8d4ea;letter-spacing:0.85px;white-space:pre;-webkit-text-stroke:0.15px #c8d4ea;">Nil</div>
<div style="left:320px;top:557px;width:135px;height:16px;background:#c9dbe2"></div>
<div style="left:320px;top:573px;width:135px;height:1px;background:#a9a9a9"></div>
<div style="left:-148px;width:600px;text-align:right;top:559.69px;font-family:'Liberation Sans', sans-serif;font-size:11px;line-height:11px;font-weight:normal;color:#101010;letter-spacing:-0.1px;white-space:pre;-webkit-text-stroke:0.2px #101010;">inFile*</div>
<div style="left:456px;top:565px;width:5px;height:1px;background:#c4c4c4"></div>
<div style="left:463px;top:558px;width:1px;height:14px;background:#c4c4c4"></div>
<div style="left:463px;top:558px;width:4px;height:1px;background:#c4c4c4"></div>
<div style="left:463px;top:571px;width:4px;height:1px;background:#c4c4c4"></div>
<div style="left:468px;top:559.61px;font-family:'Liberation Sans', sans-serif;font-size:10.5px;line-height:10.5px;font-weight:normal;color:#c8d4ea;letter-spacing:0.85px;white-space:pre;-webkit-text-stroke:0.15px #c8d4ea;">Nil</div>
<div style="left:320px;top:574px;width:135px;height:16px;background:#c9dbe2"></div>
<div style="left:320px;top:590px;width:135px;height:1px;background:#a9a9a9"></div>
<div style="left:-148px;width:600px;text-align:right;top:576.69px;font-family:'Liberation Sans', sans-serif;font-size:11px;line-height:11px;font-weight:normal;color:#101010;letter-spacing:-0.1px;white-space:pre;-webkit-text-stroke:0.2px #101010;">inCalibrationId*</div>
<div style="left:456px;top:582px;width:5px;height:1px;background:#c4c4c4"></div>
<div style="left:463px;top:575px;width:1px;height:14px;background:#c4c4c4"></div>
<div style="left:463px;top:575px;width:4px;height:1px;background:#c4c4c4"></div>
<div style="left:463px;top:588px;width:4px;height:1px;background:#c4c4c4"></div>
<div style="left:468px;top:576.61px;font-family:'Liberation Sans', sans-serif;font-size:10.5px;line-height:10.5px;font-weight:normal;color:#c8d4ea;letter-spacing:0.85px;white-space:pre;-webkit-text-stroke:0.15px #c8d4ea;">Nil</div>
<div style="left:320px;top:591px;width:135px;height:16px;background:#c9dbe2"></div>
<div style="left:-148px;width:600px;text-align:right;top:593.69px;font-family:'Liberation Sans', sans-serif;font-size:11px;line-height:11px;font-weight:normal;color:#101010;letter-spacing:-0.1px;white-space:pre;-webkit-text-stroke:0.2px #101010;">inAOI*</div>
<div style="left:456px;top:599px;width:5px;height:1px;background:#c4c4c4"></div>
<div style="left:463px;top:592px;width:1px;height:14px;background:#c4c4c4"></div>
<div style="left:463px;top:592px;width:4px;height:1px;background:#c4c4c4"></div>
<div style="left:463px;top:605px;width:4px;height:1px;background:#c4c4c4"></div>
<div style="left:468px;top:593.61px;font-family:'Liberation Sans', sans-serif;font-size:10.5px;line-height:10.5px;font-weight:normal;color:#c8d4ea;letter-spacing:0.85px;white-space:pre;-webkit-text-stroke:0.15px #c8d4ea;">Auto</div>
<div style="left:191px;top:540px;width:1px;height:68px;background:#a9a9a9"></div>
<div style="left:56px;top:540px;width:135px;height:33px;background:#c9dbe2"></div>
<div style="left:56px;top:573px;width:135px;height:1px;background:#a9a9a9"></div>
<div style="left:58px;top:552.19px;font-family:'Liberation Sans', sans-serif;font-size:11px;line-height:11px;font-weight:normal;color:#101010;letter-spacing:-0.25px;white-space:pre;-webkit-text-stroke:0.2px #101010;">inRangeImage</div>
<div style="left:56px;top:574px;width:135px;height:33px;background:#e6e4ec"></div>
<div style="left:58px;top:587.19px;font-family:'Liberation Sans', sans-serif;font-size:11px;line-height:11px;font-weight:normal;color:#101010;letter-spacing:-0.25px;white-space:pre;-webkit-text-stroke:0.2px #101010;">outPointCloud?</div>
<svg style="left:55px;top:539px" width="401" height="69"><rect x="0.5" y="0.5" width="400" height="68" fill="none" stroke="#6e6e6e" stroke-width="1" stroke-dasharray="4 2"/></svg>
<svg style="left:239px;top:558px" width="32" height="32"><rect x="0.5" y="0.5" width="31" height="31" fill="#ecebea" stroke="#a9a9a9"/><rect x="7" y="7" width="18" height="18" rx="4" fill="#9a9a9a"/><circle cx="16" cy="15.5" r="6" fill="#c2c2c2"/><circle cx="16" cy="15.5" r="5" fill="#7a7a7a"/><circle cx="16" cy="15.5" r="3.3" fill="#8cbfd6"/><circle cx="15.8" cy="14.3" r="1.2" fill="#d0e6f0"/><circle cx="10.2" cy="9.2" r="1" fill="#e07070"/><circle cx="20.8" cy="8.8" r="1" fill="#6a6a6a"/></svg>
<svg style="left:186px;top:586px" width="5" height="10"><path d="M5 0.5 A4.5 4.5 0 0 0 5 9.5 Z" fill="#f6b13a" stroke="#e89a20" stroke-width="1"/></svg>
<div style="left:4px;width:510px;top:614.00px;text-align:center;white-space:pre;font-family:'Liberation Sans', sans-serif;font-size:13px;line-height:13px;font-weight:bold;color:#fbfbfb;letter-spacing:-0.15px">6. SavePoint3DGrid?<svg style="display:inline-block;vertical-align:baseline;margin-left:3px;position:relative;top:1px" width="9" height="10"><path d="M3 0 H6 V5 H9 L4.5 10 L0 5 H3 Z" fill="#4a3f3a"/></svg></div>
<div style="left:56px;top:629px;width:263px;height:51px;background:#e0dfdd"></div>
<div style="left:319px;top:629px;width:1px;height:51px;background:#a9a9a9"></div>
<div style="left:320px;top:629px;width:135px;height:16px;background:#c9dbe2"></div>
<div style="left:320px;top:645px;width:135px;height:1px;background:#a9a9a9"></div>
<div style="left:-148px;width:600px;text-align:right;top:631.69px;font-family:'Liberation Sans', sans-serif;font-size:11px;line-height:11px;font-weight:normal;color:#101010;letter-spacing:-0.1px;white-space:pre;-webkit-text-stroke:0.2px #101010;">inFile</div>
<div style="left:456px;top:637px;width:5px;height:1px;background:#c4c4c4"></div>
<div style="left:463px;top:630px;width:1px;height:14px;background:#c4c4c4"></div>
<div style="left:463px;top:630px;width:4px;height:1px;background:#c4c4c4"></div>
<div style="left:463px;top:643px;width:4px;height:1px;background:#c4c4c4"></div>
<div style="left:468px;top:631.61px;font-family:'Liberation Sans', sans-serif;font-size:10.5px;line-height:10.5px;font-weight:normal;color:#c8d4ea;letter-spacing:0.85px;white-space:pre;-webkit-text-stroke:0.15px #c8d4ea;">&quot;grabbed_cloud.ply&quot;</div>
<div style="left:320px;top:646px;width:135px;height:16px;background:#c9dbe2"></div>
<div style="left:320px;top:662px;width:135px;height:1px;background:#a9a9a9"></div>
<div style="left:-148px;width:600px;text-align:right;top:648.69px;font-family:'Liberation Sans', sans-serif;font-size:11px;line-height:11px;font-weight:normal;color:#101010;letter-spacing:-0.1px;white-space:pre;-webkit-text-stroke:0.2px #101010;">inFileFormat</div>
<div style="left:456px;top:654px;width:5px;height:1px;background:#c4c4c4"></div>
<div style="left:463px;top:647px;width:1px;height:14px;background:#c4c4c4"></div>
<div style="left:463px;top:647px;width:4px;height:1px;background:#c4c4c4"></div>
<div style="left:463px;top:660px;width:4px;height:1px;background:#c4c4c4"></div>
<div style="left:468px;top:648.61px;font-family:'Liberation Sans', sans-serif;font-size:10.5px;line-height:10.5px;font-weight:normal;color:#c8d4ea;letter-spacing:0.85px;white-space:pre;-webkit-text-stroke:0.15px #c8d4ea;">PLY</div>
<div style="left:320px;top:663px;width:135px;height:16px;background:#c9dbe2"></div>
<div style="left:-148px;width:600px;text-align:right;top:665.69px;font-family:'Liberation Sans', sans-serif;font-size:11px;line-height:11px;font-weight:normal;color:#101010;letter-spacing:-0.1px;white-space:pre;-webkit-text-stroke:0.2px #101010;">inStreamMode</div>
<div style="left:456px;top:671px;width:5px;height:1px;background:#c4c4c4"></div>
<div style="left:463px;top:664px;width:1px;height:14px;background:#c4c4c4"></div>
<div style="left:463px;top:664px;width:4px;height:1px;background:#c4c4c4"></div>
<div style="left:463px;top:677px;width:4px;height:1px;background:#c4c4c4"></div>
<div style="left:468px;top:665.61px;font-family:'Liberation Sans', sans-serif;font-size:10.5px;line-height:10.5px;font-weight:normal;color:#c8d4ea;letter-spacing:0.85px;white-space:pre;-webkit-text-stroke:0.15px #c8d4ea;">Binary</div>
<div style="left:191px;top:629px;width:1px;height:51px;background:#a9a9a9"></div>
<div style="left:56px;top:629px;width:135px;height:50px;background:#c9dbe2"></div>
<div style="left:58px;top:649.69px;font-family:'Liberation Sans', sans-serif;font-size:11px;line-height:11px;font-weight:normal;color:#101010;letter-spacing:-0.25px;white-space:pre;-webkit-text-stroke:0.2px #101010;">inPoint3DGrid</div>
<svg style="left:55px;top:628px" width="401" height="52"><rect x="0.5" y="0.5" width="400" height="51" fill="none" stroke="#6e6e6e" stroke-width="1" stroke-dasharray="4 2"/></svg>
<svg style="left:236px;top:636px" width="37" height="36"><rect x="1" y="1" width="35" height="34" fill="none" stroke="#a0a0a0" stroke-width="2" stroke-dasharray="2 2"/><rect x="2.5" y="2.5" width="32" height="31" fill="#ecebea" stroke="#a9a9a9" stroke-width="1"/><g transform="rotate(-24 18.5 18)"><path d="M5 7 H30 L32 9 V28 Q32 30 30 30 H7 Q5 30 5 28 Z" fill="#a5a5a5"/><rect x="7.5" y="7" width="21" height="12" fill="#e8ecef"/><rect x="7.5" y="7" width="21" height="2" fill="#ee9a66"/><circle cx="18" cy="13.5" r="3.2" fill="#ee9a66"/><rect x="11.5" y="22" width="13" height="8" fill="#cacaca"/><rect x="14" y="23.5" width="1.6" height="5" fill="#7d7d7d"/></g></svg>
<svg style="left:186px;top:649px" width="5" height="10"><path d="M5 0.5 A4.5 4.5 0 0 0 5 9.5 Z" fill="#f6b13a" stroke="#e89a20" stroke-width="1"/></svg>
<div style="left:34px;top:398px;width:21px;height:2px;background:#fff"></div>
<div style="left:34px;top:488px;width:12px;height:2px;background:#fff"></div>
<svg style="left:44px;top:483px" width="12" height="12"><path d="M1 1 L11 6 L1 11 Z" fill="#fff"/></svg>
<div style="left:58px;top:519px;width:1.5px;height:9px;background:#fff"></div>
<svg style="left:54px;top:528px" width="10" height="11"><path d="M0.8 0.8 H8.8 L4.8 10.2 Z" fill="none" stroke="#fff" stroke-width="1.2"/></svg>
<div style="left:58px;top:608px;width:1.5px;height:9px;background:#fff"></div>
<svg style="left:54px;top:617px" width="10" height="11"><path d="M0.8 0.8 H8.8 L4.8 10.2 Z" fill="none" stroke="#fff" stroke-width="1.2"/></svg>
<div style="left:612px;top:0px;width:325px;height:16px;background:#f0f0f0"></div>
<svg style="left:612px;top:0px" width="130" height="17"><path d="M3 16 L19 0 H127 V16 Z" fill="#fff"/><path d="M3 16 L19 0" stroke="#9a9a9a" stroke-width="1" fill="none"/><path d="M127 0 V16" stroke="#d0d0d0" stroke-width="1"/></svg>
<div style="left:631px;top:1.69px;font-family:'Liberation Sans', sans-serif;font-size:11px;line-height:11px;font-weight:normal;color:#0a0a30;letter-spacing:-0.25px;white-space:pre;">outAOI.DataChannel1</div>
<svg style="left:890px;top:0px" width="42" height="12"><path d="M7.5 1.5 L2.5 5.5 L7.5 9.5 Z" fill="none" stroke="#222" stroke-width="1"/><path d="M17.5 1.5 L22.5 5.5 L17.5 9.5 Z" fill="none" stroke="#222" stroke-width="1"/><path d="M31 3.8 L37.5 10.3 M37.5 3.8 L31 10.3" stroke="#000" stroke-width="2.6"/></svg>
<div style="left:612px;top:16px;width:321px;height:742px;background:#111"></div>
<div style="left:614px;top:41px;width:317px;height:717px;background:conic-gradient(#1e1e1e 0 90deg,#474747 0 180deg,#1e1e1e 0 270deg,#474747 0);background-size:50px 50px"></div>
<div style="left:614px;top:18px;width:317px;height:23px;background:linear-gradient(#fdfdfd,#f1f1f1);border-radius:6px 6px 6px 6px"></div>
<div style="left:713px;top:19px;width:50px;height:21px;background:#fff"></div>
<svg style="left:668px;top:20px" width="40" height="18"><defs><linearGradient id="ga" x1="0" y1="0" x2="0" y2="1"><stop offset="0" stop-color="#7ee07e"/><stop offset="1" stop-color="#149a2a"/></linearGradient></defs><path d="M3 9 L10 3 V15 Z" fill="url(#ga)"/><path d="M9 9 L16 3 V15 Z" fill="url(#ga)"/><path d="M26 9 L33 3 V15 Z" fill="url(#ga)"/></svg>
<div style="left:754px;top:22.69px;font-family:'Liberation Sans', sans-serif;font-size:11px;line-height:11px;font-weight:normal;color:#102040;letter-spacing:0px;white-space:pre;">0</div>
<svg style="left:768px;top:20px" width="40" height="18"><defs><linearGradient id="gb" x1="0" y1="0" x2="0" y2="1"><stop offset="0" stop-color="#7ee07e"/><stop offset="1" stop-color="#149a2a"/></linearGradient></defs><path d="M4 3 L11 9 L4 15 Z" fill="url(#gb)"/><path d="M24 3 L31 9 L24 15 Z" fill="url(#gb)"/><path d="M30 3 L37 9 L30 15 Z" fill="url(#gb)"/></svg>
<div style="left:813px;top:22.69px;font-family:'Liberation Sans', sans-serif;font-size:11px;line-height:11px;font-weight:normal;color:#0a0a30;letter-spacing:0.1px;white-space:pre;">Array size: 1</div>
<div style="left:614px;top:41px;width:275px;height:65px;background:rgba(0,0,0,0.4)"></div>
<div style="left:614px;top:71px;width:275px;height:1px;background:#3a3a3a"></div>
<div style="left:614px;top:72px;width:275px;height:19px;background:rgba(0,0,0,0.3)"></div>
<div style="left:619px;top:45.47px;font-family:'Liberation Sans', sans-serif;font-size:11.5px;line-height:11.5px;font-weight:normal;color:#86e486;letter-spacing:-0.45px;white-space:pre;transform:scaleY(1.15);transform-origin:0 9.7px;">Zoom: 15 %</div>
<div style="left:619px;top:58.07px;font-family:'Liberation Sans', sans-serif;font-size:11.5px;line-height:11.5px;font-weight:normal;color:#86e486;letter-spacing:-0.2px;white-space:pre;transform:scaleY(1.12);transform-origin:0 9.7px;">90, -1259</div>
<div style="left:619px;top:76.29px;font-family:'Liberation Sans', sans-serif;font-size:11px;line-height:11px;font-weight:normal;color:#86e486;letter-spacing:-0.12px;white-space:pre;transform:scaleY(1.12);transform-origin:0 9.3px;">outAOI.DataChannel1 2048x215 1xUInt16</div>
<svg style="left:846px;top:73px" width="44" height="17"><path d="M3.5 2.5 H1.2 V14.5 H3.5 M9.5 2.5 H11.8 V14.5 H9.5" fill="none" stroke="#7fd07f" stroke-width="1.2"/><path d="M6.5 3 V8.5 L3.8 8.5 Z M6.5 8.5 L9.2 8.5 L6.5 14 Z" fill="#7fd07f"/><path d="M15 14 Q16 6 25 4 Q19 8 17.5 14 Z" fill="#7fd07f"/><path d="M17 12.5 Q23 12 25 7" stroke="#7fd07f" stroke-width="1.4" fill="none"/><circle cx="36" cy="8.5" r="6.3" fill="#7fd07f"/><path d="M33 5.5 L39 11.5 M39 5.5 L33 11.5" stroke="#111" stroke-width="2"/></svg>
<svg style="left:746px;top:91px" width="12" height="12"><path d="M1 6 L6 1.5 L11 6 M1 10.5 L6 6 L11 10.5" fill="none" stroke="#7fe07f" stroke-width="1.6"/></svg>
<div style="left:614px;top:386px;width:317px;height:33px;background:#fff"></div>
<svg style="left:740px;top:386px" width="50" height="33"><rect x="33" y="2" width="1" height="1" fill="#000"/><rect x="33" y="6" width="1" height="3" fill="#000"/><rect x="33" y="11" width="1" height="4" fill="#000"/><rect x="33" y="17" width="1" height="3" fill="#000"/><rect x="38" y="11" width="1" height="4" fill="#000"/><rect x="38" y="17" width="1" height="7" fill="#000"/><rect x="38" y="29" width="1" height="1" fill="#000"/><rect x="13" y="12" width="1" height="1" fill="#000"/><rect x="26" y="22" width="1" height="1" fill="#000"/><rect x="31" y="14" width="1" height="1" fill="#000"/></svg>
<div style="left:933px;top:16px;width:4px;height:742px;background:#f4f4f8"></div>
<div style="left:937px;top:0px;width:738px;height:16px;background:#f0f0f0"></div>
<svg style="left:937px;top:0px" width="105" height="17"><path d="M2 16 L18 0 H102 V16 Z" fill="#fff"/><path d="M2 16 L18 0" stroke="#9a9a9a" stroke-width="1" fill="none"/><path d="M102.5 0 V16" stroke="#d0d0d0" stroke-width="1"/></svg>
<div style="left:956px;top:0.84px;font-family:'Liberation Sans', sans-serif;font-size:12px;line-height:12px;font-weight:bold;color:#000;letter-spacing:-0.2px;white-space:pre;">outPointCloud</div>
<svg style="left:1630px;top:0px" width="42" height="12"><path d="M7.5 1.5 L2.5 5.5 L7.5 9.5 Z" fill="none" stroke="#222" stroke-width="1"/><path d="M18.5 1.5 L23.5 5.5 L18.5 9.5 Z" fill="none" stroke="#222" stroke-width="1"/><path d="M31.5 3.8 L38 10.3 M38 3.8 L31.5 10.3" stroke="#000" stroke-width="2.6"/></svg>
<div style="left:937px;top:16px;width:738px;height:742px;background:#ffd200"></div>
<div style="left:939px;top:18px;width:733px;height:740px;background:#111111"></div>
<div style="left:1674px;top:0px;width:1px;height:758px;background:#050505"></div>
<div style="left:1671px;top:18px;width:1px;height:740px;background:#00000c"></div>
<svg style="left:939px;top:18px" width="733" height="740" viewBox="939 18 733 740"><polygon points="1134.60,449.50 1135.40,450.22 1225.21,293.37 1224.69,292.88" fill="#ffffff" stroke="#ffffff" stroke-width="0.6"/><polygon points="1135.40,450.22 1136.19,450.94 1225.73,293.86 1225.21,293.37" fill="#ffffff" stroke="#ffffff" stroke-width="0.6"/><polygon points="1136.19,450.94 1136.99,451.67 1226.24,294.36 1225.73,293.86" fill="#ffffff" stroke="#ffffff" stroke-width="0.6"/><polygon points="1136.99,451.67 1137.78,452.39 1226.76,294.85 1226.24,294.36" fill="#ffffff" stroke="#ffffff" stroke-width="0.6"/><polygon points="1137.78,452.39 1138.58,453.11 1227.28,295.35 1226.76,294.85" fill="#ffffff" stroke="#ffffff" stroke-width="0.6"/><polygon points="1138.58,453.11 1139.38,453.83 1227.80,295.84 1227.28,295.35" fill="#fffaff" stroke="#fffaff" stroke-width="0.6"/><polygon points="1139.38,453.83 1140.17,454.55 1228.31,296.33 1227.80,295.84" fill="#fff1ff" stroke="#fff1ff" stroke-width="0.6"/><polygon points="1140.17,454.55 1140.97,455.27 1228.83,296.83 1228.31,296.33" fill="#ffe7ff" stroke="#ffe7ff" stroke-width="0.6"/><polygon points="1140.97,455.27 1141.77,456.00 1229.35,297.32 1228.83,296.83" fill="#ffdeff" stroke="#ffdeff" stroke-width="0.6"/><polygon points="1141.77,456.00 1142.56,456.72 1229.87,297.82 1229.35,297.32" fill="#ffd5ff" stroke="#ffd5ff" stroke-width="0.6"/><polygon points="1142.56,456.72 1143.36,457.44 1230.38,298.31 1229.87,297.82" fill="#ffccff" stroke="#ffccff" stroke-width="0.6"/><polygon points="1143.36,457.44 1144.15,458.16 1230.90,298.81 1230.38,298.31" fill="#ffc2ff" stroke="#ffc2ff" stroke-width="0.6"/><polygon points="1144.15,458.16 1144.95,458.88 1231.42,299.30 1230.90,298.81" fill="#ffb9ff" stroke="#ffb9ff" stroke-width="0.6"/><polygon points="1144.95,458.88 1145.75,459.61 1231.94,299.79 1231.42,299.30" fill="#ffb0ff" stroke="#ffb0ff" stroke-width="0.6"/><polygon points="1145.75,459.61 1146.54,460.33 1232.45,300.29 1231.94,299.79" fill="#ffa7ff" stroke="#ffa7ff" stroke-width="0.6"/><polygon points="1146.54,460.33 1147.34,461.05 1232.97,300.78 1232.45,300.29" fill="#ff9dff" stroke="#ff9dff" stroke-width="0.6"/><polygon points="1147.34,461.05 1148.14,461.77 1233.49,301.28 1232.97,300.78" fill="#ff94ff" stroke="#ff94ff" stroke-width="0.6"/><polygon points="1148.14,461.77 1148.93,462.49 1234.01,301.77 1233.49,301.28" fill="#ff8bff" stroke="#ff8bff" stroke-width="0.6"/><polygon points="1148.93,462.49 1149.73,463.22 1234.52,302.26 1234.01,301.77" fill="#ff81ff" stroke="#ff81ff" stroke-width="0.6"/><polygon points="1149.73,463.22 1150.52,463.94 1235.04,302.76 1234.52,302.26" fill="#ff78ff" stroke="#ff78ff" stroke-width="0.6"/><polygon points="1150.52,463.94 1151.32,464.66 1235.56,303.25 1235.04,302.76" fill="#ff6fff" stroke="#ff6fff" stroke-width="0.6"/><polygon points="1151.32,464.66 1152.12,465.38 1236.08,303.75 1235.56,303.25" fill="#ff66ff" stroke="#ff66ff" stroke-width="0.6"/><polygon points="1152.12,465.38 1152.91,466.10 1236.59,304.24 1236.08,303.75" fill="#ff5cff" stroke="#ff5cff" stroke-width="0.6"/><polygon points="1152.91,466.10 1153.71,466.82 1237.11,304.74 1236.59,304.24" fill="#ff53ff" stroke="#ff53ff" stroke-width="0.6"/><polygon points="1153.71,466.82 1154.51,467.55 1237.63,305.23 1237.11,304.74" fill="#ff4aff" stroke="#ff4aff" stroke-width="0.6"/><polygon points="1154.51,467.55 1155.30,468.27 1238.15,305.72 1237.63,305.23" fill="#ff41ff" stroke="#ff41ff" stroke-width="0.6"/><polygon points="1155.30,468.27 1156.10,468.99 1238.66,306.22 1238.15,305.72" fill="#ff37ff" stroke="#ff37ff" stroke-width="0.6"/><polygon points="1156.10,468.99 1156.89,469.71 1239.18,306.71 1238.66,306.22" fill="#ff2eff" stroke="#ff2eff" stroke-width="0.6"/><polygon points="1156.89,469.71 1157.69,470.43 1239.70,307.21 1239.18,306.71" fill="#ff25ff" stroke="#ff25ff" stroke-width="0.6"/><polygon points="1157.69,470.43 1158.49,471.16 1240.22,307.70 1239.70,307.21" fill="#ff1cff" stroke="#ff1cff" stroke-width="0.6"/><polygon points="1158.49,471.16 1159.28,471.88 1240.73,308.20 1240.22,307.70" fill="#ff12ff" stroke="#ff12ff" stroke-width="0.6"/><polygon points="1159.28,471.88 1160.08,472.60 1241.25,308.69 1240.73,308.20" fill="#ff09ff" stroke="#ff09ff" stroke-width="0.6"/><polygon points="1160.08,472.60 1160.88,473.32 1241.77,309.18 1241.25,308.69" fill="#ff00ff" stroke="#ff00ff" stroke-width="0.6"/><polygon points="1160.88,473.32 1161.67,474.04 1242.29,309.68 1241.77,309.18" fill="#ff00f5" stroke="#ff00f5" stroke-width="0.6"/><polygon points="1161.67,474.04 1162.47,474.77 1242.80,310.17 1242.29,309.68" fill="#ff00ec" stroke="#ff00ec" stroke-width="0.6"/><polygon points="1162.47,474.77 1163.26,475.49 1243.32,310.67 1242.80,310.17" fill="#ff00e3" stroke="#ff00e3" stroke-width="0.6"/><polygon points="1163.26,475.49 1164.06,476.21 1243.84,311.16 1243.32,310.67" fill="#ff00da" stroke="#ff00da" stroke-width="0.6"/><polygon points="1164.06,476.21 1164.86,476.93 1244.36,311.65 1243.84,311.16" fill="#ff00d0" stroke="#ff00d0" stroke-width="0.6"/><polygon points="1164.86,476.93 1165.65,477.65 1244.87,312.15 1244.36,311.65" fill="#ff00c7" stroke="#ff00c7" stroke-width="0.6"/><polygon points="1165.65,477.65 1166.45,478.38 1245.39,312.64 1244.87,312.15" fill="#ff00be" stroke="#ff00be" stroke-width="0.6"/><polygon points="1166.45,478.38 1167.25,479.10 1245.91,313.14 1245.39,312.64" fill="#ff00b5" stroke="#ff00b5" stroke-width="0.6"/><polygon points="1167.25,479.10 1168.04,479.82 1246.43,313.63 1245.91,313.14" fill="#ff00ab" stroke="#ff00ab" stroke-width="0.6"/><polygon points="1168.04,479.82 1168.84,480.54 1246.95,314.13 1246.43,313.63" fill="#ff00a2" stroke="#ff00a2" stroke-width="0.6"/><polygon points="1168.84,480.54 1169.63,481.26 1247.46,314.62 1246.95,314.13" fill="#ff0099" stroke="#ff0099" stroke-width="0.6"/><polygon points="1169.63,481.26 1170.43,481.98 1247.98,315.11 1247.46,314.62" fill="#ff0090" stroke="#ff0090" stroke-width="0.6"/><polygon points="1170.43,481.98 1171.23,482.71 1248.50,315.61 1247.98,315.11" fill="#ff0086" stroke="#ff0086" stroke-width="0.6"/><polygon points="1171.23,482.71 1172.02,483.43 1249.02,316.10 1248.50,315.61" fill="#ff007d" stroke="#ff007d" stroke-width="0.6"/><polygon points="1172.02,483.43 1172.82,484.15 1249.53,316.60 1249.02,316.10" fill="#ff0074" stroke="#ff0074" stroke-width="0.6"/><polygon points="1172.82,484.15 1173.62,484.87 1250.05,317.09 1249.53,316.60" fill="#ff006a" stroke="#ff006a" stroke-width="0.6"/><polygon points="1173.62,484.87 1174.41,485.59 1250.57,317.59 1250.05,317.09" fill="#ff0061" stroke="#ff0061" stroke-width="0.6"/><polygon points="1174.41,485.59 1175.21,486.32 1251.09,318.08 1250.57,317.59" fill="#ff0058" stroke="#ff0058" stroke-width="0.6"/><polygon points="1175.21,486.32 1176.00,487.04 1251.60,318.57 1251.09,318.08" fill="#ff004f" stroke="#ff004f" stroke-width="0.6"/><polygon points="1176.00,487.04 1176.80,487.76 1252.12,319.07 1251.60,318.57" fill="#ff0045" stroke="#ff0045" stroke-width="0.6"/><polygon points="1176.80,487.76 1177.60,488.48 1252.64,319.56 1252.12,319.07" fill="#ff003c" stroke="#ff003c" stroke-width="0.6"/><polygon points="1177.60,488.48 1178.39,489.20 1253.16,320.06 1252.64,319.56" fill="#ff0033" stroke="#ff0033" stroke-width="0.6"/><polygon points="1178.39,489.20 1179.19,489.93 1253.67,320.55 1253.16,320.06" fill="#ff002a" stroke="#ff002a" stroke-width="0.6"/><polygon points="1179.19,489.93 1179.99,490.65 1254.19,321.04 1253.67,320.55" fill="#ff0020" stroke="#ff0020" stroke-width="0.6"/><polygon points="1179.99,490.65 1180.78,491.37 1254.71,321.54 1254.19,321.04" fill="#ff0017" stroke="#ff0017" stroke-width="0.6"/><polygon points="1180.78,491.37 1181.58,492.09 1255.23,322.03 1254.71,321.54" fill="#ff000e" stroke="#ff000e" stroke-width="0.6"/><polygon points="1181.58,492.09 1182.38,492.81 1255.74,322.53 1255.23,322.03" fill="#ff0004" stroke="#ff0004" stroke-width="0.6"/><polygon points="1182.38,492.81 1183.17,493.53 1256.26,323.02 1255.74,322.53" fill="#ff0500" stroke="#ff0500" stroke-width="0.6"/><polygon points="1183.17,493.53 1183.97,494.26 1256.78,323.52 1256.26,323.02" fill="#ff0e00" stroke="#ff0e00" stroke-width="0.6"/><polygon points="1183.97,494.26 1184.76,494.98 1257.30,324.01 1256.78,323.52" fill="#ff1700" stroke="#ff1700" stroke-width="0.6"/><polygon points="1184.76,494.98 1185.56,495.70 1257.81,324.50 1257.30,324.01" fill="#ff2100" stroke="#ff2100" stroke-width="0.6"/><polygon points="1185.56,495.70 1186.36,496.42 1258.33,325.00 1257.81,324.50" fill="#ff2a00" stroke="#ff2a00" stroke-width="0.6"/><polygon points="1186.36,496.42 1187.15,497.14 1258.85,325.49 1258.33,325.00" fill="#ff3300" stroke="#ff3300" stroke-width="0.6"/><polygon points="1187.15,497.14 1187.95,497.87 1259.37,325.99 1258.85,325.49" fill="#ff3c00" stroke="#ff3c00" stroke-width="0.6"/><polygon points="1187.95,497.87 1188.74,498.59 1259.88,326.48 1259.37,325.99" fill="#ff4600" stroke="#ff4600" stroke-width="0.6"/><polygon points="1188.74,498.59 1189.54,499.31 1260.40,326.98 1259.88,326.48" fill="#ff4f00" stroke="#ff4f00" stroke-width="0.6"/><polygon points="1189.54,499.31 1190.34,500.03 1260.92,327.47 1260.40,326.98" fill="#ff5800" stroke="#ff5800" stroke-width="0.6"/><polygon points="1190.34,500.03 1191.13,500.75 1261.44,327.96 1260.92,327.47" fill="#ff6100" stroke="#ff6100" stroke-width="0.6"/><polygon points="1191.13,500.75 1191.93,501.48 1261.95,328.46 1261.44,327.96" fill="#ff6b00" stroke="#ff6b00" stroke-width="0.6"/><polygon points="1191.93,501.48 1192.73,502.20 1262.47,328.95 1261.95,328.46" fill="#ff7400" stroke="#ff7400" stroke-width="0.6"/><polygon points="1192.73,502.20 1193.52,502.92 1262.99,329.45 1262.47,328.95" fill="#ff7d00" stroke="#ff7d00" stroke-width="0.6"/><polygon points="1193.52,502.92 1194.32,503.64 1263.51,329.94 1262.99,329.45" fill="#ff8700" stroke="#ff8700" stroke-width="0.6"/><polygon points="1194.32,503.64 1195.12,504.36 1264.02,330.43 1263.51,329.94" fill="#ff9000" stroke="#ff9000" stroke-width="0.6"/><polygon points="1195.12,504.36 1195.91,505.08 1264.54,330.93 1264.02,330.43" fill="#ff9900" stroke="#ff9900" stroke-width="0.6"/><polygon points="1195.91,505.08 1196.71,505.81 1265.06,331.42 1264.54,330.93" fill="#ffa200" stroke="#ffa200" stroke-width="0.6"/><polygon points="1196.71,505.81 1197.50,506.53 1265.58,331.92 1265.06,331.42" fill="#ffac00" stroke="#ffac00" stroke-width="0.6"/><polygon points="1197.50,506.53 1198.30,507.25 1266.10,332.41 1265.58,331.92" fill="#ffb500" stroke="#ffb500" stroke-width="0.6"/><polygon points="1198.30,507.25 1199.10,507.97 1266.61,332.91 1266.10,332.41" fill="#ffbe00" stroke="#ffbe00" stroke-width="0.6"/><polygon points="1199.10,507.97 1199.89,508.69 1267.13,333.40 1266.61,332.91" fill="#ffc700" stroke="#ffc700" stroke-width="0.6"/><polygon points="1199.89,508.69 1200.69,509.42 1267.65,333.89 1267.13,333.40" fill="#ffd100" stroke="#ffd100" stroke-width="0.6"/><polygon points="1200.69,509.42 1201.48,510.14 1268.17,334.39 1267.65,333.89" fill="#ffda00" stroke="#ffda00" stroke-width="0.6"/><polygon points="1201.48,510.14 1202.28,510.86 1268.68,334.88 1268.17,334.39" fill="#ffe300" stroke="#ffe300" stroke-width="0.6"/><polygon points="1202.28,510.86 1203.08,511.58 1269.20,335.38 1268.68,334.88" fill="#ffec00" stroke="#ffec00" stroke-width="0.6"/><polygon points="1203.08,511.58 1203.87,512.30 1269.72,335.87 1269.20,335.38" fill="#fff600" stroke="#fff600" stroke-width="0.6"/><polygon points="1203.87,512.30 1204.67,513.02 1270.24,336.37 1269.72,335.87" fill="#ffff00" stroke="#ffff00" stroke-width="0.6"/><polygon points="1204.67,513.02 1205.47,513.75 1270.75,336.86 1270.24,336.37" fill="#f6ff00" stroke="#f6ff00" stroke-width="0.6"/><polygon points="1205.47,513.75 1206.26,514.47 1271.27,337.35 1270.75,336.86" fill="#ecff00" stroke="#ecff00" stroke-width="0.6"/><polygon points="1206.26,514.47 1207.06,515.19 1271.79,337.85 1271.27,337.35" fill="#e3ff00" stroke="#e3ff00" stroke-width="0.6"/><polygon points="1207.06,515.19 1207.86,515.91 1272.31,338.34 1271.79,337.85" fill="#daff00" stroke="#daff00" stroke-width="0.6"/><polygon points="1207.86,515.91 1208.65,516.63 1272.82,338.84 1272.31,338.34" fill="#d1ff00" stroke="#d1ff00" stroke-width="0.6"/><polygon points="1208.65,516.63 1209.45,517.36 1273.34,339.33 1272.82,338.84" fill="#c7ff00" stroke="#c7ff00" stroke-width="0.6"/><polygon points="1209.45,517.36 1210.24,518.08 1273.86,339.82 1273.34,339.33" fill="#beff00" stroke="#beff00" stroke-width="0.6"/><polygon points="1210.24,518.08 1211.04,518.80 1274.38,340.32 1273.86,339.82" fill="#b5ff00" stroke="#b5ff00" stroke-width="0.6"/><polygon points="1211.04,518.80 1211.84,519.52 1274.89,340.81 1274.38,340.32" fill="#acff00" stroke="#acff00" stroke-width="0.6"/><polygon points="1211.84,519.52 1212.63,520.24 1275.41,341.31 1274.89,340.81" fill="#a2ff00" stroke="#a2ff00" stroke-width="0.6"/><polygon points="1212.63,520.24 1213.43,520.97 1275.93,341.80 1275.41,341.31" fill="#99ff00" stroke="#99ff00" stroke-width="0.6"/><polygon points="1213.43,520.97 1214.22,521.69 1276.45,342.30 1275.93,341.80" fill="#90ff00" stroke="#90ff00" stroke-width="0.6"/><polygon points="1214.22,521.69 1215.02,522.41 1276.96,342.79 1276.45,342.30" fill="#87ff00" stroke="#87ff00" stroke-width="0.6"/><polygon points="1215.02,522.41 1215.82,523.13 1277.48,343.28 1276.96,342.79" fill="#7dff00" stroke="#7dff00" stroke-width="0.6"/><polygon points="1215.82,523.13 1216.61,523.85 1278.00,343.78 1277.48,343.28" fill="#74ff00" stroke="#74ff00" stroke-width="0.6"/><polygon points="1216.61,523.85 1217.41,524.58 1278.52,344.27 1278.00,343.78" fill="#6bff00" stroke="#6bff00" stroke-width="0.6"/><polygon points="1217.41,524.58 1218.21,525.30 1279.03,344.77 1278.52,344.27" fill="#61ff00" stroke="#61ff00" stroke-width="0.6"/><polygon points="1218.21,525.30 1219.00,526.02 1279.55,345.26 1279.03,344.77" fill="#58ff00" stroke="#58ff00" stroke-width="0.6"/><polygon points="1219.00,526.02 1219.80,526.74 1280.07,345.76 1279.55,345.26" fill="#4fff00" stroke="#4fff00" stroke-width="0.6"/><polygon points="1219.80,526.74 1220.60,527.46 1280.59,346.25 1280.07,345.76" fill="#46ff00" stroke="#46ff00" stroke-width="0.6"/><polygon points="1220.60,527.46 1221.39,528.18 1281.10,346.74 1280.59,346.25" fill="#3cff00" stroke="#3cff00" stroke-width="0.6"/><polygon points="1221.39,528.18 1222.19,528.91 1281.62,347.24 1281.10,346.74" fill="#33ff00" stroke="#33ff00" stroke-width="0.6"/><polygon points="1222.19,528.91 1222.98,529.63 1282.14,347.73 1281.62,347.24" fill="#2aff00" stroke="#2aff00" stroke-width="0.6"/><polygon points="1222.98,529.63 1223.78,530.35 1282.66,348.23 1282.14,347.73" fill="#21ff00" stroke="#21ff00" stroke-width="0.6"/><polygon points="1223.78,530.35 1224.58,531.07 1283.17,348.72 1282.66,348.23" fill="#17ff00" stroke="#17ff00" stroke-width="0.6"/><polygon points="1224.58,531.07 1225.37,531.79 1283.69,349.21 1283.17,348.72" fill="#0eff00" stroke="#0eff00" stroke-width="0.6"/><polygon points="1225.37,531.79 1226.17,532.52 1284.21,349.71 1283.69,349.21" fill="#05ff00" stroke="#05ff00" stroke-width="0.6"/><polygon points="1226.17,532.52 1226.96,533.24 1284.73,350.20 1284.21,349.71" fill="#00ff04" stroke="#00ff04" stroke-width="0.6"/><polygon points="1226.96,533.24 1227.76,533.96 1285.24,350.70 1284.73,350.20" fill="#00ff0e" stroke="#00ff0e" stroke-width="0.6"/><polygon points="1227.76,533.96 1228.56,534.68 1285.76,351.19 1285.24,350.70" fill="#00ff17" stroke="#00ff17" stroke-width="0.6"/><polygon points="1228.56,534.68 1229.35,535.40 1286.28,351.69 1285.76,351.19" fill="#00ff20" stroke="#00ff20" stroke-width="0.6"/><polygon points="1229.35,535.40 1230.15,536.12 1286.80,352.18 1286.28,351.69" fill="#00ff2a" stroke="#00ff2a" stroke-width="0.6"/><polygon points="1230.15,536.12 1230.95,536.85 1287.32,352.67 1286.80,352.18" fill="#00ff33" stroke="#00ff33" stroke-width="0.6"/><polygon points="1230.95,536.85 1231.74,537.57 1287.83,353.17 1287.32,352.67" fill="#00ff3c" stroke="#00ff3c" stroke-width="0.6"/><polygon points="1231.74,537.57 1232.54,538.29 1288.35,353.66 1287.83,353.17" fill="#00ff45" stroke="#00ff45" stroke-width="0.6"/><polygon points="1232.54,538.29 1233.34,539.01 1288.87,354.16 1288.35,353.66" fill="#00ff4f" stroke="#00ff4f" stroke-width="0.6"/><polygon points="1233.34,539.01 1234.13,539.73 1289.39,354.65 1288.87,354.16" fill="#00ff58" stroke="#00ff58" stroke-width="0.6"/><polygon points="1234.13,539.73 1234.93,540.46 1289.90,355.14 1289.39,354.65" fill="#00ff61" stroke="#00ff61" stroke-width="0.6"/><polygon points="1234.93,540.46 1235.72,541.18 1290.42,355.64 1289.90,355.14" fill="#00ff6a" stroke="#00ff6a" stroke-width="0.6"/><polygon points="1235.72,541.18 1236.52,541.90 1290.94,356.13 1290.42,355.64" fill="#00ff74" stroke="#00ff74" stroke-width="0.6"/><polygon points="1236.52,541.90 1237.32,542.62 1291.46,356.63 1290.94,356.13" fill="#00ff7d" stroke="#00ff7d" stroke-width="0.6"/><polygon points="1237.32,542.62 1238.11,543.34 1291.97,357.12 1291.46,356.63" fill="#00ff86" stroke="#00ff86" stroke-width="0.6"/><polygon points="1238.11,543.34 1238.91,544.07 1292.49,357.62 1291.97,357.12" fill="#00ff8f" stroke="#00ff8f" stroke-width="0.6"/><polygon points="1238.91,544.07 1239.70,544.79 1293.01,358.11 1292.49,357.62" fill="#00ff99" stroke="#00ff99" stroke-width="0.6"/><polygon points="1239.70,544.79 1240.50,545.51 1293.53,358.60 1293.01,358.11" fill="#00ffa2" stroke="#00ffa2" stroke-width="0.6"/><polygon points="1240.50,545.51 1241.30,546.23 1294.04,359.10 1293.53,358.60" fill="#00ffab" stroke="#00ffab" stroke-width="0.6"/><polygon points="1241.30,546.23 1242.09,546.95 1294.56,359.59 1294.04,359.10" fill="#00ffb5" stroke="#00ffb5" stroke-width="0.6"/><polygon points="1242.09,546.95 1242.89,547.67 1295.08,360.09 1294.56,359.59" fill="#00ffbe" stroke="#00ffbe" stroke-width="0.6"/><polygon points="1242.89,547.67 1243.69,548.40 1295.60,360.58 1295.08,360.09" fill="#00ffc7" stroke="#00ffc7" stroke-width="0.6"/><polygon points="1243.69,548.40 1244.48,549.12 1296.11,361.08 1295.60,360.58" fill="#00ffd0" stroke="#00ffd0" stroke-width="0.6"/><polygon points="1244.48,549.12 1245.28,549.84 1296.63,361.57 1296.11,361.08" fill="#00ffda" stroke="#00ffda" stroke-width="0.6"/><polygon points="1245.28,549.84 1246.08,550.56 1297.15,362.06 1296.63,361.57" fill="#00ffe3" stroke="#00ffe3" stroke-width="0.6"/><polygon points="1246.08,550.56 1246.87,551.28 1297.67,362.56 1297.15,362.06" fill="#00ffec" stroke="#00ffec" stroke-width="0.6"/><polygon points="1246.87,551.28 1247.67,552.01 1298.18,363.05 1297.67,362.56" fill="#00fff5" stroke="#00fff5" stroke-width="0.6"/><polygon points="1247.67,552.01 1248.46,552.73 1298.70,363.55 1298.18,363.05" fill="#00ffff" stroke="#00ffff" stroke-width="0.6"/><polygon points="1248.46,552.73 1249.26,553.45 1299.22,364.04 1298.70,363.55" fill="#00f6ff" stroke="#00f6ff" stroke-width="0.6"/><polygon points="1249.26,553.45 1250.06,554.17 1299.74,364.53 1299.22,364.04" fill="#00edff" stroke="#00edff" stroke-width="0.6"/><polygon points="1250.06,554.17 1250.85,554.89 1300.25,365.03 1299.74,364.53" fill="#00e3ff" stroke="#00e3ff" stroke-width="0.6"/><polygon points="1250.85,554.89 1251.65,555.62 1300.77,365.52 1300.25,365.03" fill="#00daff" stroke="#00daff" stroke-width="0.6"/><polygon points="1251.65,555.62 1252.44,556.34 1301.29,366.02 1300.77,365.52" fill="#00d1ff" stroke="#00d1ff" stroke-width="0.6"/><polygon points="1252.44,556.34 1253.24,557.06 1301.81,366.51 1301.29,366.02" fill="#00c8ff" stroke="#00c8ff" stroke-width="0.6"/><polygon points="1253.24,557.06 1254.04,557.78 1302.32,367.01 1301.81,366.51" fill="#00beff" stroke="#00beff" stroke-width="0.6"/><polygon points="1254.04,557.78 1254.83,558.50 1302.84,367.50 1302.32,367.01" fill="#00b5ff" stroke="#00b5ff" stroke-width="0.6"/><polygon points="1254.83,558.50 1255.63,559.23 1303.36,367.99 1302.84,367.50" fill="#00acff" stroke="#00acff" stroke-width="0.6"/><polygon points="1255.63,559.23 1256.43,559.95 1303.88,368.49 1303.36,367.99" fill="#00a3ff" stroke="#00a3ff" stroke-width="0.6"/><polygon points="1256.43,559.95 1257.22,560.67 1304.39,368.98 1303.88,368.49" fill="#0099ff" stroke="#0099ff" stroke-width="0.6"/><polygon points="1257.22,560.67 1258.02,561.39 1304.91,369.48 1304.39,368.98" fill="#0090ff" stroke="#0090ff" stroke-width="0.6"/><polygon points="1258.02,561.39 1258.82,562.11 1305.43,369.97 1304.91,369.48" fill="#0087ff" stroke="#0087ff" stroke-width="0.6"/><polygon points="1258.82,562.11 1259.61,562.83 1305.95,370.47 1305.43,369.97" fill="#007eff" stroke="#007eff" stroke-width="0.6"/><polygon points="1259.61,562.83 1260.41,563.56 1306.46,370.96 1305.95,370.47" fill="#0074ff" stroke="#0074ff" stroke-width="0.6"/><polygon points="1260.41,563.56 1261.20,564.28 1306.98,371.45 1306.46,370.96" fill="#006bff" stroke="#006bff" stroke-width="0.6"/><polygon points="1261.20,564.28 1262.00,565.00 1307.50,371.95 1306.98,371.45" fill="#0062ff" stroke="#0062ff" stroke-width="0.6"/><polygon points="1262.00,565.00 1263.25,566.39 1308.31,372.89 1307.50,371.95" fill="#0056ff" stroke="#0056ff" stroke-width="0.6"/><polygon points="1263.25,566.39 1264.50,567.65 1309.12,373.75 1308.31,372.89" fill="#0047ff" stroke="#0047ff" stroke-width="0.6"/><polygon points="1264.50,567.65 1265.75,568.78 1309.94,374.52 1309.12,373.75" fill="#0039ff" stroke="#0039ff" stroke-width="0.6"/><polygon points="1265.75,568.78 1267.00,569.78 1310.75,375.21 1309.94,374.52" fill="#002aff" stroke="#002aff" stroke-width="0.6"/><polygon points="1267.00,569.78 1268.25,570.64 1311.56,375.81 1310.75,375.21" fill="#001cff" stroke="#001cff" stroke-width="0.6"/><polygon points="1268.25,570.64 1269.50,571.38 1312.38,376.33 1311.56,375.81" fill="#000dff" stroke="#000dff" stroke-width="0.6"/><polygon points="1269.50,571.38 1270.75,571.98 1313.19,376.76 1312.38,376.33" fill="#0000ff" stroke="#0000ff" stroke-width="0.6"/><polygon points="1270.75,571.98 1272.00,572.44 1314.00,377.10 1313.19,376.76" fill="#0000ff" stroke="#0000ff" stroke-width="0.6"/><polygon points="1272.00,572.44 1273.25,572.78 1314.81,377.36 1314.00,377.10" fill="#0000ff" stroke="#0000ff" stroke-width="0.6"/><polygon points="1273.25,572.78 1274.50,572.99 1315.62,377.53 1314.81,377.36" fill="#0000ff" stroke="#0000ff" stroke-width="0.6"/><polygon points="1274.50,572.99 1275.75,573.06 1316.44,377.62 1315.62,377.53" fill="#0000ff" stroke="#0000ff" stroke-width="0.6"/><polygon points="1275.75,573.06 1277.00,573.00 1317.25,377.62 1316.44,377.62" fill="#0000ff" stroke="#0000ff" stroke-width="0.6"/><polygon points="1277.00,573.00 1278.25,572.81 1318.06,377.52 1317.25,377.62" fill="#0000ff" stroke="#0000ff" stroke-width="0.6"/><polygon points="1278.25,572.81 1279.50,572.49 1318.88,377.25 1318.06,377.52" fill="#0000ff" stroke="#0000ff" stroke-width="0.6"/><polygon points="1279.50,572.49 1280.75,572.03 1319.69,376.91 1318.88,377.25" fill="#0000ff" stroke="#0000ff" stroke-width="0.6"/><polygon points="1280.75,572.03 1282.00,571.44 1320.50,376.47 1319.69,376.91" fill="#0000ff" stroke="#0000ff" stroke-width="0.6"/><polygon points="1282.00,571.44 1283.25,570.73 1321.31,375.96 1320.50,376.47" fill="#0000ff" stroke="#0000ff" stroke-width="0.6"/><polygon points="1283.25,570.73 1284.50,569.88 1322.12,375.35 1321.31,375.96" fill="#0000ff" stroke="#0000ff" stroke-width="0.6"/><polygon points="1284.50,569.88 1285.75,568.89 1322.94,374.66 1322.12,375.35" fill="#0000ff" stroke="#0000ff" stroke-width="0.6"/><polygon points="1285.75,568.89 1287.00,567.78 1323.75,373.89 1322.94,374.66" fill="#0000ff" stroke="#0000ff" stroke-width="0.6"/><polygon points="1287.00,567.78 1288.25,566.53 1324.56,373.02 1323.75,373.89" fill="#0000ff" stroke="#0000ff" stroke-width="0.6"/><polygon points="1288.25,566.53 1289.50,565.15 1325.38,372.08 1324.56,373.02" fill="#0000ff" stroke="#0000ff" stroke-width="0.6"/><polygon points="1289.50,565.15 1290.75,563.64 1326.19,371.04 1325.38,372.08" fill="#0002ff" stroke="#0002ff" stroke-width="0.6"/><polygon points="1290.75,563.64 1292.00,562.00 1327.00,369.92 1326.19,371.04" fill="#0011ff" stroke="#0011ff" stroke-width="0.6"/><polygon points="1292.00,562.00 1292.82,561.36 1327.53,369.48 1327.00,369.92" fill="#001eff" stroke="#001eff" stroke-width="0.6"/><polygon points="1292.82,561.36 1293.64,560.73 1328.06,369.03 1327.53,369.48" fill="#0028ff" stroke="#0028ff" stroke-width="0.6"/><polygon points="1293.64,560.73 1294.45,560.09 1328.60,368.58 1328.06,369.03" fill="#0032ff" stroke="#0032ff" stroke-width="0.6"/><polygon points="1294.45,560.09 1295.27,559.45 1329.13,368.14 1328.60,368.58" fill="#003dff" stroke="#003dff" stroke-width="0.6"/><polygon points="1295.27,559.45 1296.09,558.82 1329.66,367.69 1329.13,368.14" fill="#0047ff" stroke="#0047ff" stroke-width="0.6"/><polygon points="1296.09,558.82 1296.91,558.18 1330.19,367.24 1329.66,367.69" fill="#0051ff" stroke="#0051ff" stroke-width="0.6"/><polygon points="1296.91,558.18 1297.73,557.55 1330.72,366.79 1330.19,367.24" fill="#005bff" stroke="#005bff" stroke-width="0.6"/><polygon points="1297.73,557.55 1298.55,556.91 1331.25,366.35 1330.72,366.79" fill="#0065ff" stroke="#0065ff" stroke-width="0.6"/><polygon points="1298.55,556.91 1299.36,556.27 1331.79,365.90 1331.25,366.35" fill="#0070ff" stroke="#0070ff" stroke-width="0.6"/><polygon points="1299.36,556.27 1300.18,555.64 1332.32,365.45 1331.79,365.90" fill="#007aff" stroke="#007aff" stroke-width="0.6"/><polygon points="1300.18,555.64 1301.00,555.00 1332.85,365.00 1332.32,365.45" fill="#0084ff" stroke="#0084ff" stroke-width="0.6"/><polygon points="1301.00,555.00 1301.82,554.36 1333.38,364.56 1332.85,365.00" fill="#008eff" stroke="#008eff" stroke-width="0.6"/><polygon points="1301.82,554.36 1302.64,553.73 1333.91,364.11 1333.38,364.56" fill="#0099ff" stroke="#0099ff" stroke-width="0.6"/><polygon points="1302.64,553.73 1303.45,553.09 1334.45,363.66 1333.91,364.11" fill="#00a3ff" stroke="#00a3ff" stroke-width="0.6"/><polygon points="1303.45,553.09 1304.27,552.45 1334.98,363.22 1334.45,363.66" fill="#00adff" stroke="#00adff" stroke-width="0.6"/><polygon points="1304.27,552.45 1305.09,551.82 1335.51,362.77 1334.98,363.22" fill="#00b7ff" stroke="#00b7ff" stroke-width="0.6"/><polygon points="1305.09,551.82 1305.91,551.18 1336.04,362.32 1335.51,362.77" fill="#00c1ff" stroke="#00c1ff" stroke-width="0.6"/><polygon points="1305.91,551.18 1306.73,550.55 1336.57,361.87 1336.04,362.32" fill="#00ccff" stroke="#00ccff" stroke-width="0.6"/><polygon points="1306.73,550.55 1307.55,549.91 1337.10,361.43 1336.57,361.87" fill="#00d6ff" stroke="#00d6ff" stroke-width="0.6"/><polygon points="1307.55,549.91 1308.36,549.27 1337.64,360.98 1337.10,361.43" fill="#00e0ff" stroke="#00e0ff" stroke-width="0.6"/><polygon points="1308.36,549.27 1309.18,548.64 1338.17,360.53 1337.64,360.98" fill="#00eaff" stroke="#00eaff" stroke-width="0.6"/><polygon points="1309.18,548.64 1310.00,548.00 1338.70,360.08 1338.17,360.53" fill="#00f4ff" stroke="#00f4ff" stroke-width="0.6"/><polygon points="1310.00,548.00 1310.82,547.36 1339.23,359.64 1338.70,360.08" fill="#00ffff" stroke="#00ffff" stroke-width="0.6"/><polygon points="1310.82,547.36 1311.64,546.73 1339.76,359.19 1339.23,359.64" fill="#00fff5" stroke="#00fff5" stroke-width="0.6"/><polygon points="1311.64,546.73 1312.45,546.09 1340.30,358.74 1339.76,359.19" fill="#00ffeb" stroke="#00ffeb" stroke-width="0.6"/><polygon points="1312.45,546.09 1313.27,545.45 1340.83,358.30 1340.30,358.74" fill="#00ffe1" stroke="#00ffe1" stroke-width="0.6"/><polygon points="1313.27,545.45 1314.09,544.82 1341.36,357.85 1340.83,358.30" fill="#00ffd7" stroke="#00ffd7" stroke-width="0.6"/><polygon points="1314.09,544.82 1314.91,544.18 1341.89,357.40 1341.36,357.85" fill="#00ffcc" stroke="#00ffcc" stroke-width="0.6"/><polygon points="1314.91,544.18 1315.73,543.55 1342.42,356.95 1341.89,357.40" fill="#00ffc2" stroke="#00ffc2" stroke-width="0.6"/><polygon points="1315.73,543.55 1316.55,542.91 1342.95,356.51 1342.42,356.95" fill="#00ffb8" stroke="#00ffb8" stroke-width="0.6"/><polygon points="1316.55,542.91 1317.36,542.27 1343.49,356.06 1342.95,356.51" fill="#00ffae" stroke="#00ffae" stroke-width="0.6"/><polygon points="1317.36,542.27 1318.18,541.64 1344.02,355.61 1343.49,356.06" fill="#00ffa4" stroke="#00ffa4" stroke-width="0.6"/><polygon points="1318.18,541.64 1319.00,541.00 1344.55,355.17 1344.02,355.61" fill="#00ff99" stroke="#00ff99" stroke-width="0.6"/><polygon points="1319.00,541.00 1319.82,540.36 1345.08,354.72 1344.55,355.17" fill="#00ff8f" stroke="#00ff8f" stroke-width="0.6"/><polygon points="1319.82,540.36 1320.64,539.73 1345.61,354.27 1345.08,354.72" fill="#00ff85" stroke="#00ff85" stroke-width="0.6"/><polygon points="1320.64,539.73 1321.45,539.09 1346.15,353.82 1345.61,354.27" fill="#00ff7b" stroke="#00ff7b" stroke-width="0.6"/><polygon points="1321.45,539.09 1322.27,538.45 1346.68,353.38 1346.15,353.82" fill="#00ff71" stroke="#00ff71" stroke-width="0.6"/><polygon points="1322.27,538.45 1323.09,537.82 1347.21,352.93 1346.68,353.38" fill="#00ff66" stroke="#00ff66" stroke-width="0.6"/><polygon points="1323.09,537.82 1323.91,537.18 1347.74,352.48 1347.21,352.93" fill="#00ff5c" stroke="#00ff5c" stroke-width="0.6"/><polygon points="1323.91,537.18 1324.73,536.55 1348.27,352.03 1347.74,352.48" fill="#00ff52" stroke="#00ff52" stroke-width="0.6"/><polygon points="1324.73,536.55 1325.55,535.91 1348.80,351.59 1348.27,352.03" fill="#00ff48" stroke="#00ff48" stroke-width="0.6"/><polygon points="1325.55,535.91 1326.36,535.27 1349.34,351.14 1348.80,351.59" fill="#00ff3e" stroke="#00ff3e" stroke-width="0.6"/><polygon points="1326.36,535.27 1327.18,534.64 1349.87,350.69 1349.34,351.14" fill="#00ff33" stroke="#00ff33" stroke-width="0.6"/><polygon points="1327.18,534.64 1328.00,534.00 1350.40,350.25 1349.87,350.69" fill="#00ff29" stroke="#00ff29" stroke-width="0.6"/><polygon points="1328.00,534.00 1328.82,533.36 1350.93,349.80 1350.40,350.25" fill="#00ff1f" stroke="#00ff1f" stroke-width="0.6"/><polygon points="1328.82,533.36 1329.64,532.73 1351.46,349.35 1350.93,349.80" fill="#00ff15" stroke="#00ff15" stroke-width="0.6"/><polygon points="1329.64,532.73 1330.45,532.09 1352.00,348.90 1351.46,349.35" fill="#00ff0b" stroke="#00ff0b" stroke-width="0.6"/><polygon points="1330.45,532.09 1331.27,531.45 1352.53,348.46 1352.00,348.90" fill="#00ff00" stroke="#00ff00" stroke-width="0.6"/><polygon points="1331.27,531.45 1332.09,530.82 1353.06,348.01 1352.53,348.46" fill="#0aff00" stroke="#0aff00" stroke-width="0.6"/><polygon points="1332.09,530.82 1332.91,530.18 1353.59,347.56 1353.06,348.01" fill="#14ff00" stroke="#14ff00" stroke-width="0.6"/><polygon points="1332.91,530.18 1333.73,529.55 1354.12,347.11 1353.59,347.56" fill="#1eff00" stroke="#1eff00" stroke-width="0.6"/><polygon points="1333.73,529.55 1334.55,528.91 1354.65,346.67 1354.12,347.11" fill="#29ff00" stroke="#29ff00" stroke-width="0.6"/><polygon points="1334.55,528.91 1335.36,528.27 1355.19,346.22 1354.65,346.67" fill="#33ff00" stroke="#33ff00" stroke-width="0.6"/><polygon points="1335.36,528.27 1336.18,527.64 1355.72,345.77 1355.19,346.22" fill="#3dff00" stroke="#3dff00" stroke-width="0.6"/><polygon points="1336.18,527.64 1337.00,527.00 1356.25,345.33 1355.72,345.77" fill="#47ff00" stroke="#47ff00" stroke-width="0.6"/><polygon points="1337.00,527.00 1337.82,526.36 1356.78,344.88 1356.25,345.33" fill="#51ff00" stroke="#51ff00" stroke-width="0.6"/><polygon points="1337.82,526.36 1338.64,525.73 1357.31,344.43 1356.78,344.88" fill="#5cff00" stroke="#5cff00" stroke-width="0.6"/><polygon points="1338.64,525.73 1339.45,525.09 1357.85,343.98 1357.31,344.43" fill="#66ff00" stroke="#66ff00" stroke-width="0.6"/><polygon points="1339.45,525.09 1340.27,524.45 1358.38,343.54 1357.85,343.98" fill="#70ff00" stroke="#70ff00" stroke-width="0.6"/><polygon points="1340.27,524.45 1341.09,523.82 1358.91,343.09 1358.38,343.54" fill="#7aff00" stroke="#7aff00" stroke-width="0.6"/><polygon points="1341.09,523.82 1341.91,523.18 1359.44,342.64 1358.91,343.09" fill="#84ff00" stroke="#84ff00" stroke-width="0.6"/><polygon points="1341.91,523.18 1342.73,522.55 1359.97,342.19 1359.44,342.64" fill="#8fff00" stroke="#8fff00" stroke-width="0.6"/><polygon points="1342.73,522.55 1343.55,521.91 1360.50,341.75 1359.97,342.19" fill="#99ff00" stroke="#99ff00" stroke-width="0.6"/><polygon points="1343.55,521.91 1344.36,521.27 1361.04,341.30 1360.50,341.75" fill="#a3ff00" stroke="#a3ff00" stroke-width="0.6"/><polygon points="1344.36,521.27 1345.18,520.64 1361.57,340.85 1361.04,341.30" fill="#adff00" stroke="#adff00" stroke-width="0.6"/><polygon points="1345.18,520.64 1346.00,520.00 1362.10,340.41 1361.57,340.85" fill="#b7ff00" stroke="#b7ff00" stroke-width="0.6"/><polygon points="1346.00,520.00 1346.82,519.36 1362.63,339.96 1362.10,340.41" fill="#c2ff00" stroke="#c2ff00" stroke-width="0.6"/><polygon points="1346.82,519.36 1347.64,518.73 1363.16,339.51 1362.63,339.96" fill="#ccff00" stroke="#ccff00" stroke-width="0.6"/><polygon points="1347.64,518.73 1348.45,518.09 1363.70,339.06 1363.16,339.51" fill="#d6ff00" stroke="#d6ff00" stroke-width="0.6"/><polygon points="1348.45,518.09 1349.27,517.45 1364.23,338.62 1363.70,339.06" fill="#e0ff00" stroke="#e0ff00" stroke-width="0.6"/><polygon points="1349.27,517.45 1350.09,516.82 1364.76,338.17 1364.23,338.62" fill="#eaff00" stroke="#eaff00" stroke-width="0.6"/><polygon points="1350.09,516.82 1350.91,516.18 1365.29,337.72 1364.76,338.17" fill="#f5ff00" stroke="#f5ff00" stroke-width="0.6"/><polygon points="1350.91,516.18 1351.73,515.55 1365.82,337.27 1365.29,337.72" fill="#ffff00" stroke="#ffff00" stroke-width="0.6"/><polygon points="1351.73,515.55 1352.55,514.91 1366.35,336.83 1365.82,337.27" fill="#fff500" stroke="#fff500" stroke-width="0.6"/><polygon points="1352.55,514.91 1353.36,514.27 1366.89,336.38 1366.35,336.83" fill="#ffeb00" stroke="#ffeb00" stroke-width="0.6"/><polygon points="1353.36,514.27 1354.18,513.64 1367.42,335.93 1366.89,336.38" fill="#ffe100" stroke="#ffe100" stroke-width="0.6"/><polygon points="1354.18,513.64 1355.00,513.00 1367.95,335.49 1367.42,335.93" fill="#ffd600" stroke="#ffd600" stroke-width="0.6"/><polygon points="1355.00,513.00 1355.82,512.36 1368.48,335.04 1367.95,335.49" fill="#ffcc00" stroke="#ffcc00" stroke-width="0.6"/><polygon points="1355.82,512.36 1356.64,511.73 1369.01,334.59 1368.48,335.04" fill="#ffc200" stroke="#ffc200" stroke-width="0.6"/><polygon points="1356.64,511.73 1357.45,511.09 1369.55,334.14 1369.01,334.59" fill="#ffb800" stroke="#ffb800" stroke-width="0.6"/><polygon points="1357.45,511.09 1358.27,510.45 1370.08,333.70 1369.55,334.14" fill="#ffae00" stroke="#ffae00" stroke-width="0.6"/><polygon points="1358.27,510.45 1359.09,509.82 1370.61,333.25 1370.08,333.70" fill="#ffa300" stroke="#ffa300" stroke-width="0.6"/><polygon points="1359.09,509.82 1359.91,509.18 1371.14,332.80 1370.61,333.25" fill="#ff9900" stroke="#ff9900" stroke-width="0.6"/><polygon points="1359.91,509.18 1360.73,508.55 1371.67,332.35 1371.14,332.80" fill="#ff8f00" stroke="#ff8f00" stroke-width="0.6"/><polygon points="1360.73,508.55 1361.55,507.91 1372.20,331.91 1371.67,332.35" fill="#ff8500" stroke="#ff8500" stroke-width="0.6"/><polygon points="1361.55,507.91 1362.36,507.27 1372.74,331.46 1372.20,331.91" fill="#ff7b00" stroke="#ff7b00" stroke-width="0.6"/><polygon points="1362.36,507.27 1363.18,506.64 1373.27,331.01 1372.74,331.46" fill="#ff7000" stroke="#ff7000" stroke-width="0.6"/><polygon points="1363.18,506.64 1364.00,506.00 1373.80,330.57 1373.27,331.01" fill="#ff6600" stroke="#ff6600" stroke-width="0.6"/><polygon points="1364.00,506.00 1364.82,505.36 1374.33,330.12 1373.80,330.57" fill="#ff5c00" stroke="#ff5c00" stroke-width="0.6"/><polygon points="1364.82,505.36 1365.64,504.73 1374.86,329.67 1374.33,330.12" fill="#ff5200" stroke="#ff5200" stroke-width="0.6"/><polygon points="1365.64,504.73 1366.45,504.09 1375.40,329.22 1374.86,329.67" fill="#ff4700" stroke="#ff4700" stroke-width="0.6"/><polygon points="1366.45,504.09 1367.27,503.45 1375.93,328.78 1375.40,329.22" fill="#ff3d00" stroke="#ff3d00" stroke-width="0.6"/><polygon points="1367.27,503.45 1368.09,502.82 1376.46,328.33 1375.93,328.78" fill="#ff3300" stroke="#ff3300" stroke-width="0.6"/><polygon points="1368.09,502.82 1368.91,502.18 1376.99,327.88 1376.46,328.33" fill="#ff2900" stroke="#ff2900" stroke-width="0.6"/><polygon points="1368.91,502.18 1369.73,501.55 1377.52,327.43 1376.99,327.88" fill="#ff1f00" stroke="#ff1f00" stroke-width="0.6"/><polygon points="1369.73,501.55 1370.55,500.91 1378.05,326.99 1377.52,327.43" fill="#ff1400" stroke="#ff1400" stroke-width="0.6"/><polygon points="1370.55,500.91 1371.36,500.27 1378.59,326.54 1378.05,326.99" fill="#ff0a00" stroke="#ff0a00" stroke-width="0.6"/><polygon points="1371.36,500.27 1372.18,499.64 1379.12,326.09 1378.59,326.54" fill="#ff0000" stroke="#ff0000" stroke-width="0.6"/><polygon points="1372.18,499.64 1373.00,499.00 1379.65,325.65 1379.12,326.09" fill="#ff000a" stroke="#ff000a" stroke-width="0.6"/><polygon points="1373.00,499.00 1373.82,498.36 1380.18,325.20 1379.65,325.65" fill="#ff0014" stroke="#ff0014" stroke-width="0.6"/><polygon points="1373.82,498.36 1374.64,497.73 1380.71,324.75 1380.18,325.20" fill="#ff001f" stroke="#ff001f" stroke-width="0.6"/><polygon points="1374.64,497.73 1375.45,497.09 1381.25,324.30 1380.71,324.75" fill="#ff0029" stroke="#ff0029" stroke-width="0.6"/><polygon points="1375.45,497.09 1376.27,496.45 1381.78,323.86 1381.25,324.30" fill="#ff0033" stroke="#ff0033" stroke-width="0.6"/><polygon points="1376.27,496.45 1377.09,495.82 1382.31,323.41 1381.78,323.86" fill="#ff003d" stroke="#ff003d" stroke-width="0.6"/><polygon points="1377.09,495.82 1377.91,495.18 1382.84,322.96 1382.31,323.41" fill="#ff0047" stroke="#ff0047" stroke-width="0.6"/><polygon points="1377.91,495.18 1378.73,494.55 1383.37,322.52 1382.84,322.96" fill="#ff0052" stroke="#ff0052" stroke-width="0.6"/><polygon points="1378.73,494.55 1379.55,493.91 1383.90,322.07 1383.37,322.52" fill="#ff005c" stroke="#ff005c" stroke-width="0.6"/><polygon points="1379.55,493.91 1380.36,493.27 1384.44,321.62 1383.90,322.07" fill="#ff0066" stroke="#ff0066" stroke-width="0.6"/><polygon points="1380.36,493.27 1381.18,492.64 1384.97,321.17 1384.44,321.62" fill="#ff0070" stroke="#ff0070" stroke-width="0.6"/><polygon points="1381.18,492.64 1382.00,492.00 1385.50,320.73 1384.97,321.17" fill="#ff007a" stroke="#ff007a" stroke-width="0.6"/><polygon points="1380.5,492.5 1387.5,489.5 1389.3,316.6 1382,323" fill="#ff0a80"/><rect x="1281" y="513" width="1" height="1" fill="#000a50"/><rect x="1298" y="538" width="1" height="1" fill="#000a50"/><rect x="1265" y="550" width="1" height="1" fill="#000a50"/><rect x="1294" y="554" width="1" height="1" fill="#000a50"/><rect x="1287" y="537" width="1" height="1" fill="#000a50"/><rect x="1281" y="569" width="1" height="1" fill="#000a50"/><rect x="1264" y="556" width="1" height="1" fill="#000a50"/><rect x="1290" y="545" width="1" height="1" fill="#000a50"/><rect x="1283" y="569" width="1" height="1" fill="#000a50"/><rect x="1289" y="563" width="1" height="1" fill="#000a50"/><rect x="1296" y="533" width="1" height="1" fill="#000a50"/><rect x="1279" y="511" width="1" height="1" fill="#000a50"/><rect x="1284" y="548" width="1" height="1" fill="#000a50"/><rect x="1298" y="536" width="1" height="1" fill="#000a50"/><rect x="1288" y="547" width="1" height="1" fill="#000a50"/><rect x="1288" y="536" width="1" height="1" fill="#000a50"/><rect x="1293" y="559" width="1" height="1" fill="#000a50"/><rect x="1303" y="508" width="1" height="1" fill="#000a50"/><rect x="1296" y="527" width="1" height="1" fill="#000a50"/><rect x="1277" y="546" width="1" height="1" fill="#000a50"/><rect x="1296" y="531" width="1" height="1" fill="#000a50"/><rect x="1284" y="557" width="1" height="1" fill="#000a50"/><rect x="1295" y="512" width="1" height="1" fill="#000a50"/><rect x="1294" y="559" width="1" height="1" fill="#000a50"/><rect x="1278" y="569" width="1" height="1" fill="#000a50"/><rect x="1290" y="530" width="1" height="1" fill="#000a50"/><rect x="1275" y="571" width="1" height="1" fill="#000a50"/><rect x="1286" y="566" width="1" height="1" fill="#000a50"/><rect x="1270" y="566" width="1" height="1" fill="#000a50"/><rect x="1298" y="515" width="1" height="1" fill="#000a50"/><rect x="1276" y="541" width="1" height="1" fill="#000a50"/><rect x="1275" y="546" width="1" height="1" fill="#000a50"/><rect x="1263" y="565" width="1" height="1" fill="#000a50"/><rect x="1295" y="557" width="1" height="1" fill="#000a50"/><rect x="1281" y="560" width="1" height="1" fill="#000a50"/><rect x="1291" y="557" width="1" height="1" fill="#000a50"/><rect x="1294" y="559" width="1" height="1" fill="#000a50"/><rect x="1277" y="555" width="1" height="1" fill="#000a50"/><rect x="1271" y="570" width="1" height="1" fill="#000a50"/><rect x="1291" y="510" width="1" height="1" fill="#000a50"/><rect x="1291" y="529" width="1" height="1" fill="#000a50"/><rect x="1281" y="568" width="1" height="1" fill="#000a50"/><rect x="1295" y="509" width="1" height="1" fill="#000a50"/><rect x="1304" y="502" width="1" height="1" fill="#000a50"/><rect x="1269" y="565" width="1" height="1" fill="#000a50"/><rect x="1290" y="562" width="1" height="1" fill="#000a50"/><rect x="1278" y="562" width="1" height="1" fill="#000a50"/><rect x="1277" y="537" width="1" height="1" fill="#000a50"/><rect x="1302" y="504" width="1" height="1" fill="#000a50"/><rect x="1274" y="567" width="1" height="1" fill="#000a50"/><rect x="1292" y="559" width="1" height="1" fill="#000a50"/><rect x="1294" y="556" width="1" height="1" fill="#000a50"/><rect x="1284" y="561" width="1" height="1" fill="#000a50"/><rect x="1273" y="571" width="1" height="1" fill="#000a50"/><rect x="1287" y="527" width="1" height="1" fill="#000a50"/><rect x="1302" y="508" width="1" height="1" fill="#000a50"/><rect x="1264" y="563" width="1" height="1" fill="#000a50"/><rect x="1282" y="566" width="1" height="1" fill="#000a50"/><rect x="1288" y="509" width="1" height="1" fill="#000a50"/><rect x="1285" y="551" width="1" height="1" fill="#000a50"/><rect x="1267" y="564" width="1" height="1" fill="#000a50"/><rect x="1285" y="536" width="1" height="1" fill="#000a50"/><rect x="1292" y="560" width="1" height="1" fill="#000a50"/><rect x="1269" y="539" width="1" height="1" fill="#000a50"/><rect x="1285" y="539" width="1" height="1" fill="#000a50"/><rect x="1298" y="531" width="1" height="1" fill="#000a50"/><rect x="1270" y="530" width="1" height="1" fill="#000a50"/><rect x="1272" y="569" width="1" height="1" fill="#000a50"/><rect x="1276" y="559" width="1" height="1" fill="#000a50"/><rect x="1288" y="556" width="1" height="1" fill="#000a50"/><rect x="1296" y="527" width="1" height="1" fill="#000a50"/><rect x="1270" y="561" width="1" height="1" fill="#000a50"/><rect x="1280" y="563" width="1" height="1" fill="#000a50"/><rect x="1288" y="514" width="1" height="1" fill="#000a50"/><rect x="1277" y="513" width="1" height="1" fill="#000a50"/><rect x="1281" y="524" width="1" height="1" fill="#000a50"/><rect x="1300" y="522" width="1" height="1" fill="#000a50"/><rect x="1270" y="568" width="1" height="1" fill="#000a50"/><rect x="1271" y="570" width="1" height="1" fill="#000a50"/><rect x="1286" y="564" width="1" height="1" fill="#000a50"/><rect x="1297" y="551" width="1" height="1" fill="#000a50"/><rect x="1273" y="560" width="1" height="1" fill="#000a50"/><rect x="1291" y="553" width="1" height="1" fill="#000a50"/><rect x="1298" y="534" width="1" height="1" fill="#000a50"/><rect x="1296" y="546" width="1" height="1" fill="#000a50"/><rect x="1285" y="563" width="1" height="1" fill="#000a50"/><rect x="1263" y="565" width="1" height="1" fill="#000a50"/><rect x="1291" y="561" width="1" height="1" fill="#000a50"/><rect x="1268" y="568" width="1" height="1" fill="#000a50"/><rect x="1297" y="546" width="1" height="1" fill="#000a50"/><rect x="1293" y="551" width="1" height="1" fill="#000a50"/><rect x="1271" y="526" width="1" height="1" fill="#000a50"/><rect x="1290" y="544" width="1" height="1" fill="#000a50"/><rect x="1279" y="519" width="1" height="1" fill="#000a50"/><rect x="1268" y="559" width="1" height="1" fill="#000a50"/><rect x="1282" y="520" width="1" height="1" fill="#000a50"/><rect x="1302" y="503" width="1" height="1" fill="#000a50"/><rect x="1299" y="538" width="1" height="1" fill="#000a50"/><rect x="1293" y="554" width="1" height="1" fill="#000a50"/><rect x="1270" y="530" width="1" height="1" fill="#000a50"/><rect x="1302" y="510" width="1" height="1" fill="#000a50"/><rect x="1289" y="559" width="1" height="1" fill="#000a50"/><rect x="1293" y="546" width="1" height="1" fill="#000a50"/><rect x="1299" y="535" width="1" height="1" fill="#000a50"/><rect x="1290" y="545" width="1" height="1" fill="#000a50"/><rect x="1286" y="522" width="1" height="1" fill="#000a50"/><rect x="1271" y="568" width="1" height="1" fill="#000a50"/><rect x="1277" y="548" width="1" height="1" fill="#000a50"/><rect x="1294" y="510" width="1" height="1" fill="#000a50"/><rect x="1294" y="557" width="1" height="1" fill="#000a50"/><rect x="1267" y="560" width="1" height="1" fill="#000a50"/><rect x="1287" y="563" width="1" height="1" fill="#000a50"/><rect x="1304" y="507" width="1" height="1" fill="#000a50"/><rect x="1286" y="556" width="1" height="1" fill="#000a50"/><rect x="1287" y="553" width="1" height="1" fill="#000a50"/><rect x="1294" y="512" width="1" height="1" fill="#000a50"/><rect x="1272" y="563" width="1" height="1" fill="#000a50"/><rect x="1289" y="547" width="1" height="1" fill="#000a50"/><rect x="1269" y="567" width="1" height="1" fill="#000a50"/><rect x="1279" y="558" width="1" height="1" fill="#000a50"/><rect x="1276" y="548" width="1" height="1" fill="#000a50"/><rect x="1285" y="567" width="1" height="1" fill="#000a50"/><rect x="1283" y="513" width="1" height="1" fill="#000a50"/><rect x="1263" y="559" width="1" height="1" fill="#000a50"/><rect x="1279" y="533" width="1" height="1" fill="#000a50"/><rect x="1285" y="568" width="1" height="1" fill="#000a50"/><rect x="1283" y="560" width="1" height="1" fill="#000a50"/><rect x="1294" y="539" width="1" height="1" fill="#000a50"/><rect x="1291" y="545" width="1" height="1" fill="#000a50"/><rect x="1292" y="539" width="1" height="1" fill="#000a50"/><rect x="1295" y="527" width="1" height="1" fill="#000a50"/><rect x="1291" y="558" width="1" height="1" fill="#000a50"/><rect x="1270" y="554" width="1" height="1" fill="#000a50"/><rect x="1293" y="558" width="1" height="1" fill="#000a50"/><rect x="1278" y="532" width="1" height="1" fill="#000a50"/><rect x="1287" y="545" width="1" height="1" fill="#000a50"/><rect x="1291" y="531" width="1" height="1" fill="#000a50"/><rect x="1270" y="555" width="1" height="1" fill="#000a50"/><rect x="1297" y="536" width="1" height="1" fill="#000a50"/><rect x="1282" y="530" width="1" height="1" fill="#000a50"/><mask id="gm" maskUnits="userSpaceOnUse" x="939" y="18" width="733" height="740"><rect x="939" y="18" width="733" height="740" fill="#fff"/><polygon points="1134.6,449.5 1173.30,484.59 1249.85,316.89 1224.69,292.88" fill="#000"/></mask><g mask="url(#gm)"><g transform="translate(0.5 0.5)" shape-rendering="crispEdges"><line x1="1017.6" y1="474.1" x2="1633.4" y2="503.0" stroke="#7e7e7e" stroke-width="1.0" stroke-opacity="1.0"/><line x1="1059.4" y1="421.3" x2="1605.5" y2="445.0" stroke="#7e7e7e" stroke-width="1.0" stroke-opacity="1.0"/><line x1="1092.3" y1="379.8" x2="1583.5" y2="399.4" stroke="#7e7e7e" stroke-width="1.0" stroke-opacity="1.0"/><line x1="1119.1" y1="346.1" x2="1565.7" y2="362.3" stroke="#7e7e7e" stroke-width="1.0" stroke-opacity="1.0"/><line x1="1141.7" y1="317.6" x2="1550.6" y2="331.0" stroke="#7e7e7e" stroke-width="1.0" stroke-opacity="1.0"/><line x1="1160.4" y1="293.9" x2="1538.1" y2="305.0" stroke="#7e7e7e" stroke-width="1.0" stroke-opacity="1.0"/><line x1="1177.0" y1="273.0" x2="1527.0" y2="282.0" stroke="#7e7e7e" stroke-width="1.0" stroke-opacity="1.0"/><line x1="1098.0" y1="547.3" x2="1244.0" y2="274.8" stroke="#7e7e7e" stroke-width="1.0" stroke-opacity="1.0"/><line x1="1235.5" y1="554.5" x2="1314.0" y2="276.6" stroke="#7e7e7e" stroke-width="1.0" stroke-opacity="1.0"/><line x1="1376.2" y1="562.0" x2="1385.6" y2="278.4" stroke="#7e7e7e" stroke-width="1.0" stroke-opacity="1.0"/><line x1="1520.0" y1="570.3" x2="1456.5" y2="280.2" stroke="#7e7e7e" stroke-width="1.0" stroke-opacity="1.0"/><line x1="1669.0" y1="577.0" x2="1527.0" y2="282.0" stroke="#7e7e7e" stroke-width="1.0" stroke-opacity="1.0"/></g></g><g transform="translate(0.5 0.5)"><line x1="939" y1="540" x2="1672" y2="578" stroke="#a83232" stroke-width="1.0" stroke-opacity="1.0"/><line x1="939" y1="574" x2="1190" y2="256" stroke="#389638" stroke-width="1.0" stroke-opacity="1.0"/><line x1="1190" y1="256" x2="1168.3" y2="249.4" stroke="#389638" stroke-width="1.0" stroke-opacity="1.0"/><line x1="1190" y1="256" x2="1200.5" y2="275.7" stroke="#389638" stroke-width="1.0" stroke-opacity="1.0"/><line x1="938.8" y1="401.2" x2="1003.5" y2="758" stroke="#5252b8" stroke-width="1.0" stroke-opacity="1.0"/><line x1="939.4" y1="180.2" x2="954.8" y2="194.7" stroke="#5a5ad0" stroke-width="1.4" stroke-opacity="1.0"/></g><line x1="1305.5" y1="375" x2="1305.5" y2="388" stroke="#888" stroke-width="1" stroke-opacity="1.0"/><line x1="1305" y1="389" x2="1324" y2="391" stroke="#c03050" stroke-width="1" stroke-opacity="1.0"/><rect x="1189" y="240" width="12" height="16" fill="#060606"/><text x="1195.0" y="251.5" text-anchor="middle" font-family="'Liberation Sans', sans-serif" font-size="10" font-weight="bold" letter-spacing="0" fill="#4cb04c">Y</text><rect x="1310" y="262" width="12" height="15" fill="#060606"/><text x="1316.4" y="273" text-anchor="middle" font-family="'Liberation Sans', sans-serif" font-size="11" font-weight="bold" letter-spacing="0.8" fill="#fff">0</text><rect x="1543" y="298" width="28" height="16" fill="#060606"/><text x="1557.6" y="310" text-anchor="middle" font-family="'Liberation Sans', sans-serif" font-size="11" font-weight="bold" letter-spacing="1.2" fill="#fff">250</text><rect x="1636" y="496" width="12" height="16" fill="#060606"/><text x="1642.4" y="508" text-anchor="middle" font-family="'Liberation Sans', sans-serif" font-size="11" font-weight="bold" letter-spacing="0.8" fill="#fff">0</text></svg>
<div style="left:944px;top:23px;width:89px;height:21px;background:#080808"></div>
<div style="left:947px;top:27.69px;font-family:'Liberation Sans', sans-serif;font-size:11px;line-height:11px;font-weight:normal;color:#86d886;letter-spacing:0px;white-space:pre;">outPointCloud</div>
<div style="left:1601px;top:34px;width:61px;height:208px;background:#0a0a0a"></div>
<div style="left:1605px;top:38px;width:15px;height:200px;background:linear-gradient(#ffffff,#ff00ff 16.67%,#ff0000 33.33%,#ffff00 50%,#00ff00 66.67%,#00ffff 83.33%,#0000ff)"></div>
<div style="left:1627px;top:36.84px;font-family:'Liberation Sans', sans-serif;font-size:12px;line-height:12px;font-weight:normal;color:#fff;letter-spacing:-0.2px;white-space:pre;">14.3</div>
<div style="left:1627px;top:82.34px;font-family:'Liberation Sans', sans-serif;font-size:12px;line-height:12px;font-weight:normal;color:#fff;letter-spacing:-0.2px;white-space:pre;">0.3</div>
<div style="left:1627px;top:133.34px;font-family:'Liberation Sans', sans-serif;font-size:12px;line-height:12px;font-weight:normal;color:#fff;letter-spacing:-0.2px;white-space:pre;">-13.7</div>
<div style="left:1627px;top:182.34px;font-family:'Liberation Sans', sans-serif;font-size:12px;line-height:12px;font-weight:normal;color:#fff;letter-spacing:-0.2px;white-space:pre;">-27.7</div>
<div style="left:1627px;top:228.34px;font-family:'Liberation Sans', sans-serif;font-size:12px;line-height:12px;font-weight:normal;color:#fff;letter-spacing:-0.2px;white-space:pre;">-41.7</div></div></body></html>
